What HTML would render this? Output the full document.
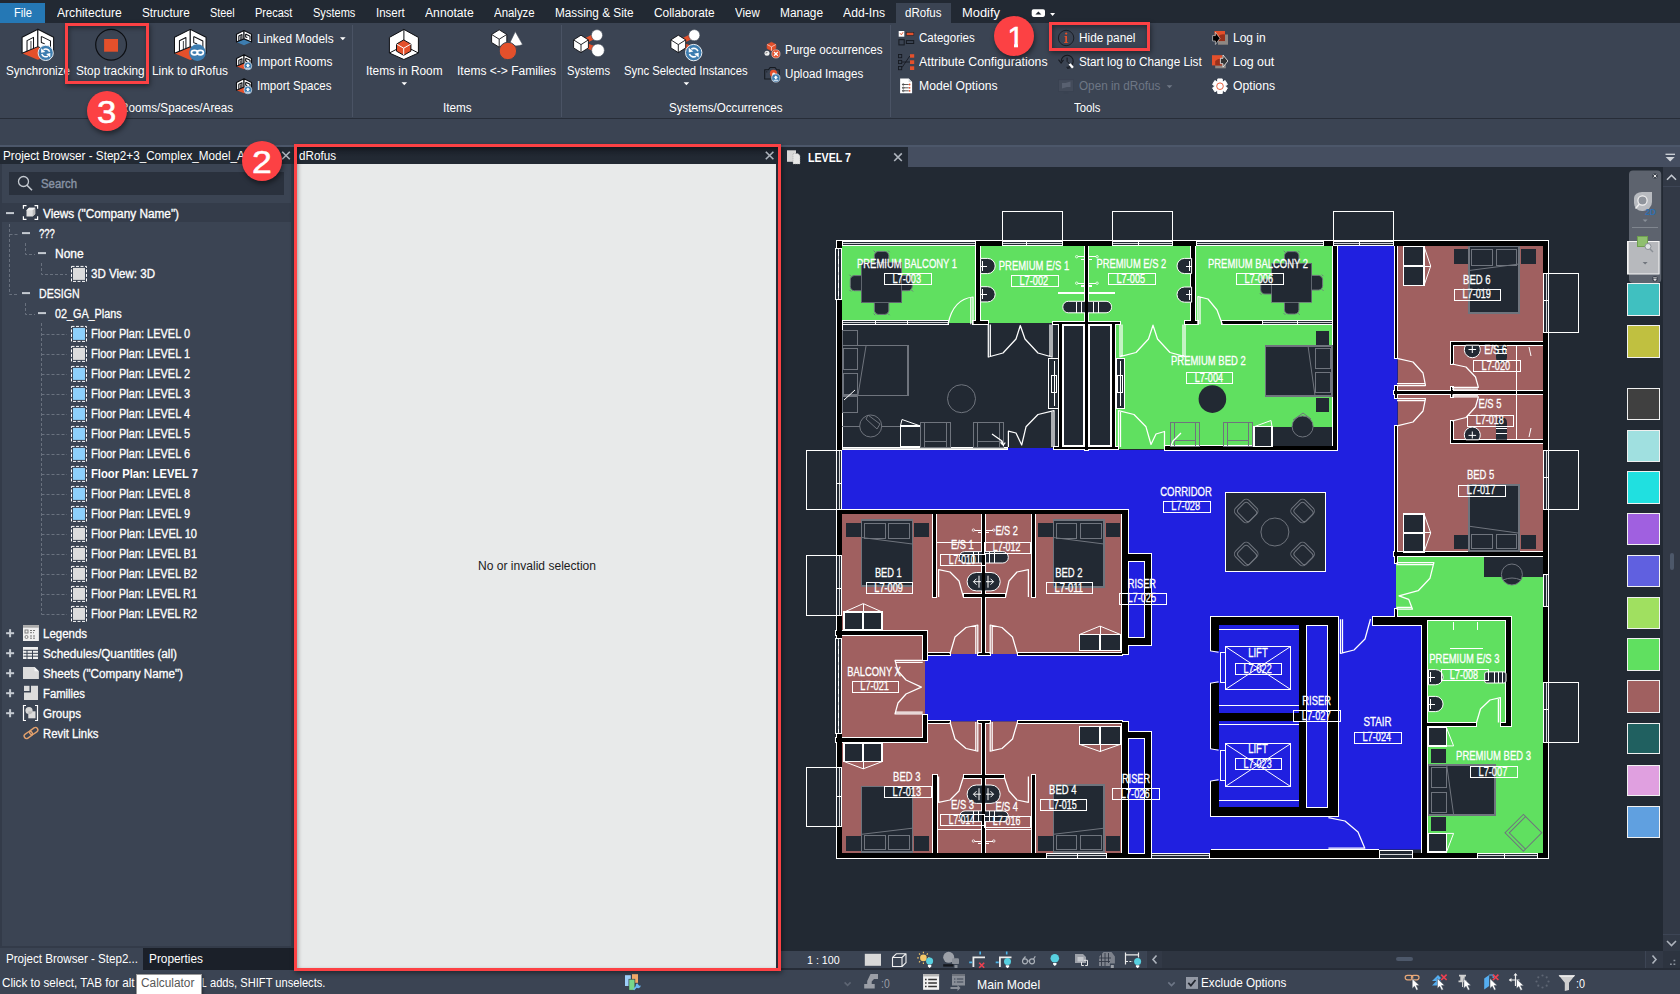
<!DOCTYPE html>
<html><head><meta charset="utf-8"><title>Revit dRofus</title><style>
html,body{margin:0;padding:0}
body{width:1680px;height:994px;overflow:hidden;background:#3b4453;position:relative;font-family:"Liberation Sans",sans-serif}
.b{position:absolute;box-sizing:content-box}
.t{position:absolute;white-space:pre;line-height:1;transform-origin:0 0;font-family:"Liberation Sans",sans-serif}
svg{position:absolute;overflow:visible}
svg text{font-family:"Liberation Sans",sans-serif}
</style></head><body>
<div class="b" style="left:0px;top:0px;width:1680px;height:23px;background:#222933;"></div>
<div class="b" style="left:0px;top:3px;width:45px;height:20px;background:#2578b5;"></div>
<div class="b" style="left:896px;top:3px;width:55px;height:20px;background:#3b4453;"></div>
<div class="b" style="left:0px;top:23px;width:1680px;height:95px;background:#3b4453;"></div>
<div class="b" style="left:0px;top:118px;width:1680px;height:1px;background:#272d38;"></div>
<div class="b" style="left:352px;top:25px;width:1px;height:92px;background:#4a5364;"></div>
<div class="b" style="left:561px;top:25px;width:1px;height:92px;background:#4a5364;"></div>
<div class="b" style="left:890px;top:25px;width:1px;height:92px;background:#4a5364;"></div>
<div class="b" style="left:0px;top:119px;width:1680px;height:26px;background:#3b4453;"></div>
<div class="b" style="left:0px;top:145px;width:1680px;height:2px;background:#4c576a;"></div>
<div class="b" style="left:0px;top:147px;width:294px;height:17px;background:#222933;"></div>
<div class="b" style="left:0px;top:164px;width:294px;height:784px;background:#3b4453;"></div>
<div class="b" style="left:0px;top:164px;width:2px;height:784px;background:#333b49;"></div>
<div class="b" style="left:291px;top:164px;width:3px;height:784px;background:#333b49;"></div>
<div class="b" style="left:9px;top:172px;width:275px;height:23px;background:#2a313d;"></div>
<div class="b" style="left:2px;top:203px;width:289px;height:19px;background:#343c4a;"></div>
<div class="b" style="left:0px;top:946px;width:294px;height:2px;background:#333b49;"></div>
<div class="b" style="left:0px;top:948px;width:294px;height:22px;background:#1b2029;"></div>
<div class="b" style="left:0px;top:948px;width:143px;height:22px;background:#3b4453;"></div>
<div class="b" style="left:781px;top:147px;width:899px;height:20px;background:#454e60;"></div>
<div class="b" style="left:781px;top:147px;width:127px;height:20px;background:#222933;"></div>
<div class="b" style="left:781px;top:167px;width:899px;height:784px;background:#222933;"></div>
<div class="b" style="left:1663px;top:167px;width:17px;height:784px;background:#323946;"></div>
<div class="b" style="left:1663px;top:186px;width:17px;height:1px;background:#3d4555;"></div>
<div class="b" style="left:1663px;top:934px;width:17px;height:1px;background:#3d4555;"></div>
<div class="b" style="left:781px;top:951px;width:899px;height:17px;background:#323946;"></div>
<div class="b" style="left:781px;top:951px;width:365px;height:17px;background:#3b4453;"></div>
<div class="b" style="left:1162px;top:951px;width:483px;height:17px;background:#2e3541;"></div>
<div class="b" style="left:1146px;top:951px;width:1px;height:17px;background:#3d4555;"></div>
<div class="b" style="left:1645px;top:951px;width:1px;height:17px;background:#3d4555;"></div>
<div class="b" style="left:1663px;top:951px;width:17px;height:17px;background:#2d3440;"></div>
<div class="b" style="left:1396px;top:957px;width:17px;height:4px;background:#4d586a;border-radius:2px;"></div>
<div class="b" style="left:1670px;top:553px;width:4px;height:17px;background:#4d586a;border-radius:2px;"></div>
<div class="b" style="left:781px;top:968px;width:899px;height:2px;background:#262c37;"></div>
<div class="b" style="left:0px;top:970px;width:1680px;height:24px;background:#3b4453;"></div>
<div class="b" style="left:294px;top:968px;width:487px;height:2px;background:#3b4453;"></div>
<div class="b" style="left:297px;top:147px;width:481px;height:17px;background:linear-gradient(#1a1f28,#222933 60%);"></div>
<div class="b" style="left:297px;top:164px;width:479px;height:804px;background:#e8eaea;"></div>
<div class="b" style="left:776px;top:164px;width:2px;height:804px;background:#2a303b;"></div>
<div class="b" style="left:294px;top:144px;width:481px;height:821px;border:3px solid #fc4144;box-shadow:1px 2px 5px rgba(0,0,0,.45),inset 1px 2px 4px rgba(0,0,0,.35)"></div>
<svg width="1680" height="140" viewBox="0 0 1680 140" style="left:0;top:0"><path d="M340.0 37.3h5.6l-2.8 3z" fill="#fff"/><path d="M401.5 82.3h5.6l-2.8 3z" fill="#fff"/><path d="M683.6 82.3h5.6l-2.8 3z" fill="#fff"/><path d="M1166.7 85.3h5.6l-2.8 3z" fill="#6e7785"/><path d="M1050.1 13h5l-2.5 3z" fill="#fff"/><rect x="1031.7" y="9.3" width="13.3" height="7.6" rx="1.8" fill="#fff"/><path d="M1035.4 14.6h6l-3-3z" fill="#222933"/></svg>
<svg width="1680" height="140" viewBox="0 0 1680 140" style="left:0;top:0;z-index:4"><g transform="translate(22.1 29.3) scale(0.985)" stroke="#0d0f13" stroke-width="1.02" stroke-linejoin="round"><path d="M0 24.3L16 17.6L32 24.3L16 31Z" fill="#e4502b" stroke="none"/><path d="M0 8L16 0L16 17.6L0 24.3Z" fill="#fff"/><path d="M16 0L32 8L32 24.3L16 17.6Z" fill="#fff"/><path d="M5 22.2L5 11.5L11.6 8.2L11.6 19.4" fill="none"/><path d="M9 20.4L9 11.8" fill="none" stroke-width="0.81"/><path d="M19.5 7.2L28.8 11.8L28.8 19.5M19.5 7.2L19.5 13.4L23 14.8" fill="none"/></g><circle cx="45.7" cy="52.9" r="7.6" fill="#3d7db0" stroke="#e9eef3" stroke-width="1"/><g transform="translate(45.7 52.9) scale(1.000)"><path d="M3.9 -1.2A4 4 0 0 0 -2.2 -3.2" fill="none" stroke="#fff" stroke-width="1.5"/><path d="M-4.6 -4.6L-4.6 -0.2L-0.4 -1.0Z" fill="#fff"/><path d="M-3.9 1.2A4 4 0 0 0 2.2 3.2" fill="none" stroke="#fff" stroke-width="1.5"/><path d="M4.6 4.6L4.6 0.2L0.4 1.0Z" fill="#fff"/></g><g style="isolation:isolate"><circle cx="111.1" cy="44.7" r="15.4" fill="none" stroke="#0d0f13" stroke-width="1.2"/><rect x="104.1" y="39" width="13.9" height="12.7" fill="#e4502b"/></g><g transform="translate(174.5 29.4) scale(0.985)" stroke="#0d0f13" stroke-width="1.02" stroke-linejoin="round"><path d="M0 24.3L16 17.6L32 24.3L16 31Z" fill="#e4502b" stroke="none"/><path d="M0 8L16 0L16 17.6L0 24.3Z" fill="#fff"/><path d="M16 0L32 8L32 24.3L16 17.6Z" fill="#fff"/><path d="M5 22.2L5 11.5L11.6 8.2L11.6 19.4" fill="none"/><path d="M9 20.4L9 11.8" fill="none" stroke-width="0.81"/><path d="M19.5 7.2L28.8 11.8L28.8 19.5M19.5 7.2L19.5 13.4L23 14.8" fill="none"/></g><circle cx="197.4" cy="52.6" r="8.4" fill="#3d7db0"/><g fill="none" stroke="#fff" stroke-width="1.7"><ellipse cx="194.5" cy="52.6" rx="3.1" ry="2.3"/><ellipse cx="200.3" cy="52.6" rx="3.1" ry="2.3"/></g><g transform="translate(236.5 30.6) scale(0.47)" stroke="#0d0f13" stroke-width="2.34" stroke-linejoin="round"><path d="M0 24.3L16 17.6L32 24.3L16 31Z" fill="#3d7db0" stroke="none"/><path d="M0 8L16 0L16 17.6L0 24.3Z" fill="#fff"/><path d="M16 0L32 8L32 24.3L16 17.6Z" fill="#fff"/><path d="M5 22.2L5 11.5L11.6 8.2L11.6 19.4" fill="none"/><path d="M9 20.4L9 11.8" fill="none" stroke-width="1.87"/><path d="M19.5 7.2L28.8 11.8L28.8 19.5M19.5 7.2L19.5 13.4L23 14.8" fill="none"/></g><g transform="translate(236.5 54.8) scale(0.47)" stroke="#0d0f13" stroke-width="2.34" stroke-linejoin="round"><path d="M0 24.3L16 17.6L32 24.3L16 31Z" fill="#e4502b" stroke="none"/><path d="M0 8L16 0L16 17.6L0 24.3Z" fill="#fff"/><path d="M16 0L32 8L32 24.3L16 17.6Z" fill="#fff"/><path d="M5 22.2L5 11.5L11.6 8.2L11.6 19.4" fill="none"/><path d="M9 20.4L9 11.8" fill="none" stroke-width="1.87"/><path d="M19.5 7.2L28.8 11.8L28.8 19.5M19.5 7.2L19.5 13.4L23 14.8" fill="none"/></g><circle cx="247.9" cy="65.9" r="3.9" fill="#3d7db0" stroke="#cfd8e2" stroke-width=".8"/><path d="M247.9 63.50000000000001L250.1 65.7L248.8 65.7L248.8 67.10000000000001L247.0 67.10000000000001L247.0 65.7L245.70000000000002 65.7Z" fill="#fff"/><path d="M245.6 68.2h4.6" stroke="#fff" stroke-width=".9"/><g transform="translate(236.5 78.8) scale(0.47)" stroke="#0d0f13" stroke-width="2.34" stroke-linejoin="round"><path d="M0 24.3L16 17.6L32 24.3L16 31Z" fill="#e4502b" stroke="none"/><path d="M0 8L16 0L16 17.6L0 24.3Z" fill="#fff"/><path d="M16 0L32 8L32 24.3L16 17.6Z" fill="#fff"/><path d="M5 22.2L5 11.5L11.6 8.2L11.6 19.4" fill="none"/><path d="M9 20.4L9 11.8" fill="none" stroke-width="1.87"/><path d="M19.5 7.2L28.8 11.8L28.8 19.5M19.5 7.2L19.5 13.4L23 14.8" fill="none"/></g><circle cx="247.9" cy="89.9" r="3.9" fill="#3d7db0" stroke="#cfd8e2" stroke-width=".8"/><path d="M247.9 87.5L250.1 89.7L248.8 89.7L248.8 91.10000000000001L247.0 91.10000000000001L247.0 89.7L245.70000000000002 89.7Z" fill="#fff"/><path d="M245.6 92.2h4.6" stroke="#fff" stroke-width=".9"/><path d="M403.9 29.4L418.4 37.4L418.4 53L403.9 59.5L389.4 53L389.4 37.4Z" fill="#fff" stroke="#0d0f13" stroke-width="1" stroke-linejoin="round"/><path d="M403.9 29.4L403.9 45.5L389.4 53M403.9 45.5L418.4 53" fill="none" stroke="#0d0f13" stroke-width="1"/><path d="M403.7 39.9L410.9 44.058L410.9 51.141999999999996L403.7 55.3L396.5 51.141999999999996L396.5 44.058Z" fill="#e4502b" stroke="#0d0f13" stroke-width="1" stroke-linejoin="round"/><path d="M396.5 44.058L403.7 48.216L410.9 44.058M403.7 48.216L403.7 55.3" fill="none" stroke="#fff" stroke-width="1"/><path d="M515.3 31.6L522.6 44.6Q516 47.5 509.3 44Z" fill="#fff" stroke="#3b4453" stroke-width=".6"/><path d="M499.2 29.8L506.8 34.498L506.8 42.501999999999995L499.2 47.2L491.59999999999997 42.501999999999995L491.59999999999997 34.498Z" fill="#fff" stroke="#0d0f13" stroke-width="0.9" stroke-linejoin="round"/><path d="M491.59999999999997 34.498L499.2 39.196L506.8 34.498M499.2 39.196L499.2 47.2" fill="none" stroke="#0d0f13" stroke-width="0.9"/><circle cx="507.9" cy="51" r="8.7" fill="#e4502b" stroke="#3b4453" stroke-width="1"/><path d="M584 41.5L594.5 36.3" stroke="#e4502b" stroke-width="5"/><path d="M584 44.5L594 48.6" stroke="#e4502b" stroke-width="5"/><circle cx="597" cy="35.2" r="5.6" fill="#fff" stroke="#3b4453" stroke-width=".6"/><path d="M581 35.2L588.4 39.898L588.4 47.902L581 52.6L573.6 47.902L573.6 39.898Z" fill="#fff" stroke="#0d0f13" stroke-width="0.9" stroke-linejoin="round"/><path d="M573.6 39.898L581 44.596000000000004L588.4 39.898M581 44.596000000000004L581 52.6" fill="none" stroke="#0d0f13" stroke-width="0.9"/><circle cx="598" cy="50.3" r="6.4" fill="#fff" stroke="#3b4453" stroke-width=".6"/><path d="M681.3 41.5L691.8 36.3" stroke="#e4502b" stroke-width="5"/><path d="M681.3 44.5L691.3 48.6" stroke="#e4502b" stroke-width="5"/><circle cx="694.3" cy="35.2" r="5.6" fill="#fff" stroke="#3b4453" stroke-width=".6"/><path d="M678.3 35.2L685.6999999999999 39.898L685.6999999999999 47.902L678.3 52.6L670.9 47.902L670.9 39.898Z" fill="#fff" stroke="#0d0f13" stroke-width="0.9" stroke-linejoin="round"/><path d="M670.9 39.898L678.3 44.596000000000004L685.6999999999999 39.898M678.3 44.596000000000004L678.3 52.6" fill="none" stroke="#0d0f13" stroke-width="0.9"/><circle cx="693.7" cy="52.6" r="8.2" fill="#3d7db0" stroke="#e9eef3" stroke-width="1"/><g transform="translate(693.7 52.6) scale(1.079)"><path d="M3.9 -1.2A4 4 0 0 0 -2.2 -3.2" fill="none" stroke="#fff" stroke-width="1.5"/><path d="M-4.6 -4.6L-4.6 -0.2L-0.4 -1.0Z" fill="#fff"/><path d="M-3.9 1.2A4 4 0 0 0 2.2 3.2" fill="none" stroke="#fff" stroke-width="1.5"/><path d="M4.6 4.6L4.6 0.2L0.4 1.0Z" fill="#fff"/></g><path d="M771.5 42.2L775.9 44.522000000000006L775.9 48.47800000000001L771.5 50.800000000000004L767.1 48.47800000000001L767.1 44.522000000000006Z" fill="#e4502b" stroke="#e4502b" stroke-width="0.6" stroke-linejoin="round"/><path d="M767.1 44.522000000000006L771.5 46.844L775.9 44.522000000000006M771.5 46.844L771.5 50.800000000000004" fill="none" stroke="#fff" stroke-width="0.6"/><circle cx="767" cy="53.2" r="2.5" fill="#f2f2f2"/><path d="M766 53.8v-1.4h1.6" stroke="#555" stroke-width=".6" fill="none"/><circle cx="775.9" cy="53.9" r="4.1" fill="#e4502b" stroke="#f0c8bd" stroke-width=".7"/><path d="M774 52l3.8 3.8m0 -3.8l-3.8 3.8" stroke="#fff" stroke-width="1.3"/><path d="M764.7 69.8h3.8l1.6-2.3h5l1.6 2.3h2.6v9.2h-14.6z" fill="none" stroke="#161a21" stroke-width="1.1" stroke-linejoin="round"/><circle cx="773.5" cy="73.4" r="3.6" fill="#e4502b"/><circle cx="773.8" cy="74.2" r="1.6" fill="#f0f0f0"/><circle cx="766.8" cy="71.8" r=".6" fill="#161a21"/><circle cx="775.8" cy="78" r="4.1" fill="#3d7db0" stroke="#cfd8e2" stroke-width=".8"/><path d="M775.8 75.6L778.0 77.8L776.6999999999999 77.8L776.6999999999999 79.2L774.9 79.2L774.9 77.8L773.5999999999999 77.8Z" fill="#fff"/><path d="M773.5 80.3h4.6" stroke="#fff" stroke-width=".9"/><rect x="898.7" y="31" width="5.6" height="5.7" fill="#fff"/><path d="M900 33.2l1.4 1.6l1.7-2.6" stroke="#e4502b" stroke-width=".9" fill="none"/><rect x="906.3" y="32.5" width="7.5" height="2.8" fill="#e4502b" stroke="#1a1e26" stroke-width=".5"/><rect x="898.9" y="39.7" width="5.3" height="5.2" fill="none" stroke="#161a21" stroke-width="1"/><rect x="906.4" y="40.6" width="7.3" height="2.9" fill="none" stroke="#161a21" stroke-width="1"/><rect x="898.5" y="54.5" width="3.2" height="3.2" fill="none" stroke="#161a21" stroke-width=".9"/><rect x="898.5" y="60.4" width="3.2" height="3.2" fill="none" stroke="#161a21" stroke-width=".9"/><rect x="898.5" y="66.5" width="3.2" height="3.2" fill="none" stroke="#161a21" stroke-width=".9"/><rect x="910" y="54.2" width="4.2" height="3.5" fill="#e4502b"/><rect x="910" y="60.3" width="4.2" height="3.7" fill="#e4502b"/><rect x="910" y="66.3" width="4.2" height="3.7" fill="#e4502b"/><path d="M902 67.5L909.8 56M902 62H910" stroke="#161a21" stroke-width=".9" fill="none"/><path d="M900.1 78.5h8.6l3.4 3.6v11.2h-12z" fill="#fff"/><path d="M908.7 78.5v3.6h3.4z" fill="#cfd3d8"/><path d="M902.2 84.5h6.5" stroke="#333" stroke-width=".8"/><circle cx="903.3" cy="84.5" r=".9" fill="none" stroke="#333" stroke-width=".5"/><circle cx="909.6" cy="84.5" r=".9" fill="#e4502b"/><path d="M902.2 87.8h6.5" stroke="#333" stroke-width=".8"/><circle cx="903.3" cy="87.8" r=".9" fill="none" stroke="#333" stroke-width=".5"/><circle cx="909.6" cy="87.8" r=".9" fill="#e4502b"/><path d="M902.2 90.8h6.5" stroke="#333" stroke-width=".8"/><circle cx="903.3" cy="90.8" r=".9" fill="none" stroke="#333" stroke-width=".5"/><circle cx="909.6" cy="90.8" r=".9" fill="#e4502b"/><g style="isolation:isolate"><circle cx="1066.1" cy="38" r="7.7" fill="none" stroke="#1a1e26" stroke-width="1"/><circle cx="1066.2" cy="33.6" r="1.1" fill="#e4502b"/><path d="M1064.6 36h2.4v6.2h1.2v.9h-4.2v-.9h1.3v-5.3h-.7z" fill="#e4502b"/></g><path d="M1061.2 61.5A6 6 0 1 1 1066.5 67.2" fill="none" stroke="#161a21" stroke-width="1.1"/><path d="M1058.5 59.6l2.6 3.4l2.4-3.2" fill="none" stroke="#161a21" stroke-width="1.1"/><path d="M1067.1 57.6v3.8l2.4 2.4" fill="none" stroke="#161a21" stroke-width="1"/><path d="M1068.6 64.6l1.9-1.3l3.3 3.6l-1.8 1.6z" fill="#fff"/><path d="M1067.2 68.5l3-.6" stroke="#161a21" stroke-width=".9"/><rect x="1058.5" y="79.7" width="15" height="11.8" fill="#434b5a" stroke="#394150" stroke-width=".8"/><path d="M1062 88.5v-5.5h3.5l5-1.5v5.5h-3.5z" fill="#586070"/><path d="M1063.5 93h5" stroke="#394150" stroke-width="1"/><rect x="1218" y="34.5" width="10" height="10.2" fill="#8d8884"/><rect x="1214.5" y="31" width="10.5" height="10.1" fill="#e4502b"/><path d="M1218 41.1V36.5Q1221 33.5 1225 34.5V41.1z" fill="#98301b"/><path d="M1212.6 35.6h2.8v-3.4l4.6 6.1l-4.6 6.2v-3.5h-2.8z" fill="#000" stroke="#e8e8e8" stroke-width=".6"/><rect x="1215.2" y="58.4" width="10.6" height="9.9" fill="#8d8884"/><rect x="1212" y="55.2" width="10.3" height="10.2" fill="#e4502b"/><path d="M1215.2 65.4V61Q1218 58 1222.3 58.6V65.4z" fill="#98301b"/><path d="M1220.4 58.3h2.6v-3.3l4.9 6l-4.9 6.1v-3.4h-2.6z" fill="#333" stroke="#f0f0f0" stroke-width=".8"/><path d="M1217.75 78.94L1222.25 78.94L1222.32 81.00L1223.35 81.58L1225.16 80.62L1227.41 84.51L1225.67 85.61L1225.67 86.79L1227.41 87.89L1225.16 91.78L1223.35 90.82L1222.32 91.40L1222.25 93.46L1217.75 93.46L1217.68 91.40L1216.65 90.82L1214.84 91.78L1212.59 87.89L1214.33 86.79L1214.33 85.61L1212.59 84.51L1214.84 80.62L1216.65 81.58L1217.68 81.00Z" fill="#fff" stroke="#fff" stroke-width="1" stroke-linejoin="round"/><circle cx="1220" cy="86.2" r="3.3" fill="#fff" stroke="#e4502b" stroke-width=".9"/></svg>
<div class="b" style="left:65px;top:23px;width:78px;height:55px;border:3px solid #fc4144;box-shadow:1px 2px 5px rgba(0,0,0,.45),inset 1px 2px 5px rgba(0,0,0,.4);z-index:5"></div>
<div class="b" style="left:1049px;top:22px;width:95px;height:23px;border:3px solid #fc4144;box-shadow:1px 2px 5px rgba(0,0,0,.45),inset 1px 2px 5px rgba(0,0,0,.4);z-index:5"></div>
<div class="b" style="left:994px;top:15.899999999999999px;width:40px;height:40px;border-radius:50%;background:#fc4144;box-shadow:1px 3px 5px rgba(0,0,0,.45);z-index:8"></div>
<span class="t" style="left:1007.4px;top:22.1px;font-size:29.5px;color:#fff;-webkit-text-stroke:.5px #fff;transform:scaleX(1.0);z-index:9">1</span>
<div class="b" style="left:1005px;top:43.7px;width:8.7px;height:4.6px;background:#fc4144;z-index:10"></div>
<div class="b" style="left:1018.1px;top:43.7px;width:6px;height:4.6px;background:#fc4144;z-index:10"></div>
<div class="b" style="left:242px;top:141px;width:40px;height:40px;border-radius:50%;background:#fc4144;box-shadow:1px 3px 5px rgba(0,0,0,.45);z-index:8"></div>
<span class="t" style="left:251.8px;top:146.8px;font-size:30.5px;color:#fff;-webkit-text-stroke:.5px #fff;transform:scaleX(1.17);z-index:9">2</span>
<div class="b" style="left:87px;top:91px;width:40px;height:40px;border-radius:50%;background:#fc4144;box-shadow:1px 3px 5px rgba(0,0,0,.45);z-index:8"></div>
<span class="t" style="left:97.3px;top:96.7px;font-size:30.5px;color:#fff;-webkit-text-stroke:.5px #fff;transform:scaleX(1.14);z-index:9">3</span>
<svg width="1680" height="994" viewBox="0 0 1680 994" style="left:0;top:0;z-index:3"><rect x="6" y="212.1" width="8" height="2" fill="#c5cad1"/><rect x="22" y="232.1" width="8" height="2" fill="#c5cad1"/><rect x="38" y="252.1" width="8" height="2" fill="#c5cad1"/><rect x="22" y="292.1" width="8" height="2" fill="#c5cad1"/><rect x="38" y="312.1" width="8" height="2" fill="#c5cad1"/><rect x="6.1" y="632.2" width="8" height="2" fill="#c5cad1"/><rect x="9.1" y="629.2" width="2" height="8" fill="#c5cad1"/><rect x="6.1" y="652.2" width="8" height="2" fill="#c5cad1"/><rect x="9.1" y="649.2" width="2" height="8" fill="#c5cad1"/><rect x="6.1" y="672.2" width="8" height="2" fill="#c5cad1"/><rect x="9.1" y="669.2" width="2" height="8" fill="#c5cad1"/><rect x="6.1" y="692.2" width="8" height="2" fill="#c5cad1"/><rect x="9.1" y="689.2" width="2" height="8" fill="#c5cad1"/><rect x="6.1" y="712.2" width="8" height="2" fill="#c5cad1"/><rect x="9.1" y="709.2" width="2" height="8" fill="#c5cad1"/><path d="M9.5 224V294.5H19" fill="none" stroke="#69717e" stroke-width="1" stroke-dasharray="3 2"/><path d="M9.5 234.5H19" fill="none" stroke="#69717e" stroke-width="1" stroke-dasharray="3 2"/><path d="M25.5 243V254.5H35" fill="none" stroke="#69717e" stroke-width="1" stroke-dasharray="3 2"/><path d="M41.5 263V274.5H67" fill="none" stroke="#69717e" stroke-width="1" stroke-dasharray="3 2"/><path d="M25.5 303V314.5H35" fill="none" stroke="#69717e" stroke-width="1" stroke-dasharray="3 2"/><path d="M41.5 323V614.5" fill="none" stroke="#69717e" stroke-width="1" stroke-dasharray="3 2"/><path d="M41.5 334.5H67" fill="none" stroke="#69717e" stroke-width="1" stroke-dasharray="3 2"/><path d="M41.5 354.5H67" fill="none" stroke="#69717e" stroke-width="1" stroke-dasharray="3 2"/><path d="M41.5 374.5H67" fill="none" stroke="#69717e" stroke-width="1" stroke-dasharray="3 2"/><path d="M41.5 394.5H67" fill="none" stroke="#69717e" stroke-width="1" stroke-dasharray="3 2"/><path d="M41.5 414.5H67" fill="none" stroke="#69717e" stroke-width="1" stroke-dasharray="3 2"/><path d="M41.5 434.5H67" fill="none" stroke="#69717e" stroke-width="1" stroke-dasharray="3 2"/><path d="M41.5 454.5H67" fill="none" stroke="#69717e" stroke-width="1" stroke-dasharray="3 2"/><path d="M41.5 474.5H67" fill="none" stroke="#69717e" stroke-width="1" stroke-dasharray="3 2"/><path d="M41.5 494.5H67" fill="none" stroke="#69717e" stroke-width="1" stroke-dasharray="3 2"/><path d="M41.5 514.5H67" fill="none" stroke="#69717e" stroke-width="1" stroke-dasharray="3 2"/><path d="M41.5 534.5H67" fill="none" stroke="#69717e" stroke-width="1" stroke-dasharray="3 2"/><path d="M41.5 554.5H67" fill="none" stroke="#69717e" stroke-width="1" stroke-dasharray="3 2"/><path d="M41.5 574.5H67" fill="none" stroke="#69717e" stroke-width="1" stroke-dasharray="3 2"/><path d="M41.5 594.5H67" fill="none" stroke="#69717e" stroke-width="1" stroke-dasharray="3 2"/><path d="M41.5 614.5H67" fill="none" stroke="#69717e" stroke-width="1" stroke-dasharray="3 2"/><rect x="71.5" y="266.4" width="15" height="15" fill="none" stroke="#fff" stroke-width="1" stroke-dasharray="3 1.5"/><rect x="73" y="267.9" width="12" height="12" fill="#dcdcdc"/><rect x="71.5" y="326.4" width="15" height="15" fill="none" stroke="#fff" stroke-width="1" stroke-dasharray="3 1.5"/><rect x="73" y="327.9" width="12" height="12" fill="#8dd0fb"/><rect x="71.5" y="346.4" width="15" height="15" fill="none" stroke="#fff" stroke-width="1" stroke-dasharray="3 1.5"/><rect x="73" y="347.9" width="12" height="12" fill="#dcdcdc"/><rect x="71.5" y="366.4" width="15" height="15" fill="none" stroke="#fff" stroke-width="1" stroke-dasharray="3 1.5"/><rect x="73" y="367.9" width="12" height="12" fill="#8dd0fb"/><rect x="71.5" y="386.4" width="15" height="15" fill="none" stroke="#fff" stroke-width="1" stroke-dasharray="3 1.5"/><rect x="73" y="387.9" width="12" height="12" fill="#8dd0fb"/><rect x="71.5" y="406.4" width="15" height="15" fill="none" stroke="#fff" stroke-width="1" stroke-dasharray="3 1.5"/><rect x="73" y="407.9" width="12" height="12" fill="#8dd0fb"/><rect x="71.5" y="426.4" width="15" height="15" fill="none" stroke="#fff" stroke-width="1" stroke-dasharray="3 1.5"/><rect x="73" y="427.9" width="12" height="12" fill="#8dd0fb"/><rect x="71.5" y="446.4" width="15" height="15" fill="none" stroke="#fff" stroke-width="1" stroke-dasharray="3 1.5"/><rect x="73" y="447.9" width="12" height="12" fill="#8dd0fb"/><rect x="71.5" y="466.4" width="15" height="15" fill="none" stroke="#fff" stroke-width="1" stroke-dasharray="3 1.5"/><rect x="73" y="467.9" width="12" height="12" fill="#8dd0fb"/><rect x="71.5" y="486.4" width="15" height="15" fill="none" stroke="#fff" stroke-width="1" stroke-dasharray="3 1.5"/><rect x="73" y="487.9" width="12" height="12" fill="#8dd0fb"/><rect x="71.5" y="506.4" width="15" height="15" fill="none" stroke="#fff" stroke-width="1" stroke-dasharray="3 1.5"/><rect x="73" y="507.9" width="12" height="12" fill="#8dd0fb"/><rect x="71.5" y="526.4" width="15" height="15" fill="none" stroke="#fff" stroke-width="1" stroke-dasharray="3 1.5"/><rect x="73" y="527.9" width="12" height="12" fill="#dcdcdc"/><rect x="71.5" y="546.4" width="15" height="15" fill="none" stroke="#fff" stroke-width="1" stroke-dasharray="3 1.5"/><rect x="73" y="547.9" width="12" height="12" fill="#dcdcdc"/><rect x="71.5" y="566.4" width="15" height="15" fill="none" stroke="#fff" stroke-width="1" stroke-dasharray="3 1.5"/><rect x="73" y="567.9" width="12" height="12" fill="#dcdcdc"/><rect x="71.5" y="586.4" width="15" height="15" fill="none" stroke="#fff" stroke-width="1" stroke-dasharray="3 1.5"/><rect x="73" y="587.9" width="12" height="12" fill="#dcdcdc"/><rect x="71.5" y="606.4" width="15" height="15" fill="none" stroke="#fff" stroke-width="1" stroke-dasharray="3 1.5"/><rect x="73" y="607.9" width="12" height="12" fill="#dcdcdc"/><path d="M23.4 208.8V205.7H26.5M34.5 205.7H37.6V208.8M37.6 216.3V219.4H34.5M26.5 219.4H23.4V216.3" fill="none" stroke="#fff" stroke-width="1.2"/><path d="M26.5 210.3L29 207.8H35.2V214L32.7 216.6H26.5Z" fill="#dedede"/><path d="M32.7 210.3V216.6L35.2 214V207.8Z" fill="#bdbdbd"/><path d="M26.5 210.3L29 207.8H35.2L32.7 210.3Z" fill="#f2f2f2"/><rect x="23" y="625.1" width="15.9" height="15.9" fill="#f0f0f0"/><rect x="23" y="625.1" width="15.9" height="2.6" fill="#a9a9a9"/><rect x="25" y="630" width="3" height="3" fill="none" stroke="#777" stroke-width=".9"/><circle cx="26.5" cy="637" r="1.5" fill="none" stroke="#777" stroke-width=".9"/><path d="M30 630.5h6M30 632.7h4M30 636h6M30 638.2h5" stroke="#777" stroke-width="1" stroke-dasharray="2 1"/><rect x="23" y="647" width="15" height="12" fill="#f0f0f0"/><path d="M23.5 650.3H38M23.5 653.3H38M23.5 656.2H38M27 650V659M32.5 650V659" stroke="#3b4453" stroke-width="1"/><path d="M23 667H34.5L38.9 671.2V679H23Z" fill="#dcdcdc"/><path d="M34.5 667V671.2H38.9Z" fill="#f6f6f6"/><path d="M24 685.8H29.5V691H24Z" fill="#dcdcdc"/><path d="M31 685.8H38V700H24V692.5H31Z" fill="#dcdcdc"/><path d="M26 705.5H23.5V720.5H26M35 705.5H37.5V720.5H35" fill="none" stroke="#fff" stroke-width="1.2"/><circle cx="29" cy="710.5" r="3.6" fill="#d6d6d6"/><rect x="28.3" y="711.3" width="7.2" height="7" fill="#dcdcdc"/><path d="M28.3 711.3h4.3a3.6 3.6 0 0 1 -4.3 2.8z" fill="#bcbcbc"/><g fill="none" stroke="#e2a06c" stroke-width="1.4" transform="rotate(-35 31 733)"><rect x="23.2" y="730.6" width="9" height="4.8" rx="2.4"/><rect x="29.8" y="730.6" width="9" height="4.8" rx="2.4"/></g><circle cx="23.5" cy="181.5" r="5" fill="none" stroke="#c5cad1" stroke-width="1.3"/><path d="M27 185.3L32 190.3" stroke="#c5cad1" stroke-width="1.6"/><path d="M282.2 151.7L289.8 159.3M289.8 151.7L282.2 159.3" stroke="#aeb4bd" stroke-width="1.6"/><path d="M765.8000000000001 151.7L773.4 159.3M773.4 151.7L765.8000000000001 159.3" stroke="#aeb4bd" stroke-width="1.6"/><path d="M894.2 153.39999999999998L901.8 161.0M901.8 153.39999999999998L894.2 161.0" stroke="#aeb4bd" stroke-width="1.6"/><rect x="787" y="150.3" width="9" height="11.5" fill="#d8d8d8"/><path d="M793 153.5h5l2 2V164h-7z" fill="#e6e6e6" stroke="#9a9a9a" stroke-width=".5" stroke-dasharray="1.2 .8"/><path d="M1665.5 154.3h9.5" stroke="#d0d4da" stroke-width="1.3"/><path d="M1665.7 157h9l-4.5 4.4z" fill="#d0d4da"/><path d="M1667 179.8l4.5-4.5l4.5 4.5" fill="none" stroke="#c5cad1" stroke-width="1.6"/><path d="M1667 941l4.5 4.5l4.5-4.5" fill="none" stroke="#aeb4bd" stroke-width="1.6"/><path d="M1156.5 955.5l-3.5 4l3.5 4" fill="none" stroke="#aeb4bd" stroke-width="1.6"/><path d="M1652.5 955.5l3.5 4l-3.5 4" fill="none" stroke="#aeb4bd" stroke-width="1.6"/><path d="M1670 964.3h1.8M1673.5 964.3h1.8M1673.5 960.5h1.8" stroke="#8a919c" stroke-width="1.4"/></svg>
<svg width="1680" height="994" viewBox="0 0 1680 994" style="left:0;top:0" shape-rendering="auto">
<rect x="842.0" y="246.0" width="349.0" height="77.0" fill="#60e060" shape-rendering="crispEdges" />
<rect x="1088.0" y="246.0" width="245.0" height="200.5" fill="#60e060" shape-rendering="crispEdges" />
<rect x="1118.0" y="446.0" width="47.0" height="2.5" fill="#60e060" shape-rendering="crispEdges" />
<rect x="1058.7" y="322.0" width="56.5" height="126.8" fill="#222933" shape-rendering="crispEdges" />
<path d="M842 450L1337.5 450L1337.5 246L1397.5 246L1397.5 616.8L1421.5 616.8L1421.5 849.5L1210.5 849.5L1210.5 854L1127.7 854L1127.7 721.5L925 721.5L925 654L1127.7 654L1127.7 510L842 510Z" fill="#2020e0" stroke="none" stroke-width="1" />
<rect x="1007.4" y="447.5" width="46.6" height="3.5" fill="#2020e0" shape-rendering="crispEdges" />
<path d="M842 514L1121.4 514L1121.4 654L925 654L925 721.5L1121.4 721.5L1121.4 853.3L842 853.3Z" fill="#a06060" stroke="none" stroke-width="1" />
<rect x="1397.5" y="246.0" width="146.3" height="306.5" fill="#a06060" shape-rendering="crispEdges" />
<path d="M1396 556.5L1543.6 556.5L1543.6 853.3L1426.8 853.3L1426.8 616.8L1396 616.8Z" fill="#60e060" stroke="none" stroke-width="1" />
<rect x="835.7" y="239.7" width="713.6" height="6.3" fill="#ffffff" shape-rendering="crispEdges" />
<rect x="835.7" y="239.7" width="5.9" height="619.6" fill="#ffffff" shape-rendering="crispEdges" />
<rect x="1543.8" y="239.7" width="5.5" height="619.6" fill="#ffffff" shape-rendering="crispEdges" />
<rect x="835.7" y="853.3" width="713.6" height="6.0" fill="#ffffff" shape-rendering="crispEdges" />
<rect x="1210.5" y="848.7" width="168.5" height="10.6" fill="#ffffff" shape-rendering="crispEdges" />
<rect x="974.7" y="245.2" width="6.1" height="77.1" fill="#ffffff" shape-rendering="crispEdges" />
<rect x="1084.0" y="245.2" width="5.1" height="205.6" fill="#ffffff" shape-rendering="crispEdges" />
<rect x="1190.0" y="245.2" width="6.0" height="80.1" fill="#ffffff" shape-rendering="crispEdges" />
<rect x="1332.0" y="239.7" width="6.4" height="210.9" fill="#ffffff" shape-rendering="crispEdges" />
<rect x="972.2" y="320.0" width="16.9" height="5.3" fill="#ffffff" shape-rendering="crispEdges" />
<rect x="1051.8" y="321.2" width="69.5" height="3.9" fill="#ffffff" shape-rendering="crispEdges" />
<rect x="1057.9" y="321.2" width="4.9" height="128.4" fill="#ffffff" shape-rendering="crispEdges" />
<rect x="1110.6" y="321.2" width="5.4" height="128.4" fill="#ffffff" shape-rendering="crispEdges" />
<rect x="1184.2" y="320.0" width="14.6" height="5.3" fill="#ffffff" shape-rendering="crispEdges" />
<rect x="1221.2" y="320.0" width="42.1" height="5.3" fill="#ffffff" shape-rendering="crispEdges" />
<rect x="1164.2" y="445.4" width="174.2" height="5.2" fill="#ffffff" shape-rendering="crispEdges" />
<rect x="1053.2" y="445.7" width="65.6" height="3.9" fill="#ffffff" shape-rendering="crispEdges" />
<rect x="835.7" y="509.2" width="292.0" height="4.8" fill="#ffffff" shape-rendering="crispEdges" />
<rect x="932.1" y="513.2" width="5.0" height="84.9" fill="#ffffff" shape-rendering="crispEdges" />
<rect x="980.8" y="513.2" width="5.0" height="142.6" fill="#ffffff" shape-rendering="crispEdges" />
<rect x="1031.1" y="513.2" width="4.8" height="84.9" fill="#ffffff" shape-rendering="crispEdges" />
<rect x="962.6" y="593.2" width="43.7" height="4.8" fill="#ffffff" shape-rendering="crispEdges" />
<rect x="1120.6" y="509.2" width="7.9" height="146.1" fill="#ffffff" shape-rendering="crispEdges" />
<rect x="835.2" y="629.5" width="93.1" height="6.8" fill="#ffffff" shape-rendering="crispEdges" />
<rect x="921.9" y="629.5" width="6.4" height="31.7" fill="#ffffff" shape-rendering="crispEdges" />
<rect x="921.9" y="713.7" width="6.4" height="29.5" fill="#ffffff" shape-rendering="crispEdges" />
<rect x="835.2" y="736.5" width="93.1" height="6.7" fill="#ffffff" shape-rendering="crispEdges" />
<rect x="926.7" y="651.7" width="24.1" height="4.1" fill="#ffffff" shape-rendering="crispEdges" />
<rect x="1016.7" y="651.7" width="106.1" height="4.1" fill="#ffffff" shape-rendering="crispEdges" />
<rect x="977.0" y="651.7" width="14.0" height="4.1" fill="#ffffff" shape-rendering="crispEdges" />
<rect x="926.7" y="719.5" width="24.1" height="4.1" fill="#ffffff" shape-rendering="crispEdges" />
<rect x="1016.7" y="719.5" width="106.1" height="4.1" fill="#ffffff" shape-rendering="crispEdges" />
<rect x="977.0" y="719.5" width="14.0" height="4.1" fill="#ffffff" shape-rendering="crispEdges" />
<rect x="932.1" y="773.8" width="5.4" height="80.5" fill="#ffffff" shape-rendering="crispEdges" />
<rect x="980.8" y="720.7" width="5.0" height="133.6" fill="#ffffff" shape-rendering="crispEdges" />
<rect x="1031.1" y="773.8" width="5.2" height="80.5" fill="#ffffff" shape-rendering="crispEdges" />
<rect x="962.6" y="774.2" width="42.4" height="5.0" fill="#ffffff" shape-rendering="crispEdges" />
<rect x="1120.6" y="720.6" width="7.9" height="133.7" fill="#ffffff" shape-rendering="crispEdges" />
<rect x="1120.6" y="552.8" width="31.8" height="93.0" fill="#ffffff" shape-rendering="crispEdges" />
<rect x="1120.6" y="730.7" width="31.8" height="124.1" fill="#ffffff" shape-rendering="crispEdges" />
<rect x="1209.7" y="616.0" width="129.1" height="200.5" fill="#ffffff" shape-rendering="crispEdges" />
<rect x="1371.6" y="616.0" width="56.0" height="9.8" fill="#ffffff" shape-rendering="crispEdges" />
<rect x="1420.9" y="616.0" width="6.7" height="242.8" fill="#ffffff" shape-rendering="crispEdges" />
<rect x="1426.0" y="615.7" width="85.7" height="5.4" fill="#ffffff" shape-rendering="crispEdges" />
<rect x="1505.4" y="615.7" width="6.3" height="110.9" fill="#ffffff" shape-rendering="crispEdges" />
<rect x="1426.0" y="721.7" width="51.3" height="4.9" fill="#ffffff" shape-rendering="crispEdges" />
<rect x="1499.6" y="721.7" width="12.1" height="4.9" fill="#ffffff" shape-rendering="crispEdges" />
<rect x="1393.2" y="389.7" width="151.4" height="5.4" fill="#ffffff" shape-rendering="crispEdges" />
<rect x="1449.5" y="341.0" width="95.1" height="4.5" fill="#ffffff" shape-rendering="crispEdges" />
<rect x="1449.5" y="341.0" width="4.9" height="23.8" fill="#ffffff" shape-rendering="crispEdges" />
<rect x="1449.5" y="420.2" width="4.9" height="23.6" fill="#ffffff" shape-rendering="crispEdges" />
<rect x="1449.5" y="386.2" width="4.9" height="12.1" fill="#ffffff" shape-rendering="crispEdges" />
<rect x="1449.5" y="439.4" width="95.1" height="4.4" fill="#ffffff" shape-rendering="crispEdges" />
<rect x="1393.2" y="551.2" width="151.4" height="6.1" fill="#ffffff" shape-rendering="crispEdges" />
<rect x="1393.5" y="245.2" width="4.6" height="113.9" fill="#ffffff" shape-rendering="crispEdges" />
<rect x="1393.5" y="425.2" width="4.6" height="138.6" fill="#ffffff" shape-rendering="crispEdges" />
<rect x="1393.5" y="384.7" width="4.6" height="14.6" fill="#ffffff" shape-rendering="crispEdges" />
<rect x="1393.5" y="608.2" width="4.6" height="9.6" fill="#ffffff" shape-rendering="crispEdges" />
<rect x="836.7" y="240.7" width="711.6" height="5.7" fill="#000" shape-rendering="crispEdges" />
<rect x="836.7" y="240.7" width="5.3" height="617.6" fill="#000" shape-rendering="crispEdges" />
<rect x="1543.4" y="240.7" width="4.9" height="617.6" fill="#000" shape-rendering="crispEdges" />
<rect x="836.7" y="852.9" width="711.6" height="5.4" fill="#000" shape-rendering="crispEdges" />
<rect x="1210.1" y="849.7" width="169.3" height="8.6" fill="#000" shape-rendering="crispEdges" />
<rect x="975.7" y="246.2" width="4.1" height="75.1" fill="#000" shape-rendering="crispEdges" />
<rect x="1085.0" y="246.2" width="3.1" height="203.6" fill="#000" shape-rendering="crispEdges" />
<rect x="1191.0" y="246.2" width="4.0" height="78.1" fill="#000" shape-rendering="crispEdges" />
<rect x="1333.0" y="240.7" width="4.4" height="208.9" fill="#000" shape-rendering="crispEdges" />
<rect x="973.2" y="321.0" width="14.9" height="3.3" fill="#000" shape-rendering="crispEdges" />
<rect x="1052.8" y="322.2" width="67.5" height="1.9" fill="#000" shape-rendering="crispEdges" />
<rect x="1058.9" y="322.2" width="2.9" height="126.4" fill="#000" shape-rendering="crispEdges" />
<rect x="1111.6" y="322.2" width="3.4" height="126.4" fill="#000" shape-rendering="crispEdges" />
<rect x="1185.2" y="321.0" width="12.6" height="3.3" fill="#000" shape-rendering="crispEdges" />
<rect x="1222.2" y="321.0" width="40.1" height="3.3" fill="#000" shape-rendering="crispEdges" />
<rect x="1165.2" y="446.4" width="172.2" height="3.2" fill="#000" shape-rendering="crispEdges" />
<rect x="1054.2" y="446.7" width="63.6" height="1.9" fill="#000" shape-rendering="crispEdges" />
<rect x="836.7" y="510.2" width="291.4" height="4.2" fill="#000" shape-rendering="crispEdges" />
<rect x="933.1" y="514.2" width="3.0" height="82.9" fill="#000" shape-rendering="crispEdges" />
<rect x="981.8" y="514.2" width="3.0" height="140.6" fill="#000" shape-rendering="crispEdges" />
<rect x="1032.1" y="514.2" width="2.8" height="82.9" fill="#000" shape-rendering="crispEdges" />
<rect x="963.6" y="594.2" width="41.7" height="2.8" fill="#000" shape-rendering="crispEdges" />
<rect x="1121.6" y="510.2" width="5.9" height="144.1" fill="#000" shape-rendering="crispEdges" />
<rect x="836.2" y="630.5" width="91.1" height="4.8" fill="#000" shape-rendering="crispEdges" />
<rect x="922.9" y="630.5" width="4.4" height="29.7" fill="#000" shape-rendering="crispEdges" />
<rect x="922.9" y="714.7" width="4.4" height="27.5" fill="#000" shape-rendering="crispEdges" />
<rect x="836.2" y="737.5" width="91.1" height="4.7" fill="#000" shape-rendering="crispEdges" />
<rect x="927.7" y="652.7" width="22.1" height="2.1" fill="#000" shape-rendering="crispEdges" />
<rect x="1017.7" y="652.7" width="104.1" height="2.1" fill="#000" shape-rendering="crispEdges" />
<rect x="978.0" y="652.7" width="12.0" height="2.1" fill="#000" shape-rendering="crispEdges" />
<rect x="927.7" y="720.5" width="22.1" height="2.1" fill="#000" shape-rendering="crispEdges" />
<rect x="1017.7" y="720.5" width="104.1" height="2.1" fill="#000" shape-rendering="crispEdges" />
<rect x="978.0" y="720.5" width="12.0" height="2.1" fill="#000" shape-rendering="crispEdges" />
<rect x="933.1" y="774.8" width="3.4" height="78.5" fill="#000" shape-rendering="crispEdges" />
<rect x="981.8" y="721.7" width="3.0" height="131.6" fill="#000" shape-rendering="crispEdges" />
<rect x="1032.1" y="774.8" width="3.2" height="78.5" fill="#000" shape-rendering="crispEdges" />
<rect x="963.6" y="775.2" width="40.4" height="3.0" fill="#000" shape-rendering="crispEdges" />
<rect x="1121.6" y="721.6" width="5.9" height="131.7" fill="#000" shape-rendering="crispEdges" />
<rect x="1121.6" y="553.8" width="29.8" height="91.0" fill="#000" shape-rendering="crispEdges" />
<rect x="1121.6" y="731.7" width="29.8" height="122.1" fill="#000" shape-rendering="crispEdges" />
<rect x="1210.7" y="617.0" width="127.1" height="198.5" fill="#000" shape-rendering="crispEdges" />
<rect x="1372.6" y="617.0" width="54.0" height="7.8" fill="#000" shape-rendering="crispEdges" />
<rect x="1421.9" y="617.0" width="4.7" height="240.8" fill="#000" shape-rendering="crispEdges" />
<rect x="1427.0" y="616.7" width="83.7" height="3.4" fill="#000" shape-rendering="crispEdges" />
<rect x="1506.4" y="616.7" width="4.3" height="108.9" fill="#000" shape-rendering="crispEdges" />
<rect x="1427.0" y="722.7" width="49.3" height="2.9" fill="#000" shape-rendering="crispEdges" />
<rect x="1500.6" y="722.7" width="10.1" height="2.9" fill="#000" shape-rendering="crispEdges" />
<rect x="1394.2" y="390.7" width="149.4" height="3.4" fill="#000" shape-rendering="crispEdges" />
<rect x="1450.5" y="342.0" width="93.1" height="2.5" fill="#000" shape-rendering="crispEdges" />
<rect x="1450.5" y="342.0" width="2.9" height="21.8" fill="#000" shape-rendering="crispEdges" />
<rect x="1450.5" y="421.2" width="2.9" height="21.6" fill="#000" shape-rendering="crispEdges" />
<rect x="1450.5" y="387.2" width="2.9" height="10.1" fill="#000" shape-rendering="crispEdges" />
<rect x="1450.5" y="440.4" width="93.1" height="2.4" fill="#000" shape-rendering="crispEdges" />
<rect x="1394.2" y="552.2" width="149.4" height="4.1" fill="#000" shape-rendering="crispEdges" />
<rect x="1394.5" y="246.2" width="2.6" height="111.9" fill="#000" shape-rendering="crispEdges" />
<rect x="1394.5" y="426.2" width="2.6" height="136.6" fill="#000" shape-rendering="crispEdges" />
<rect x="1394.5" y="385.7" width="2.6" height="12.6" fill="#000" shape-rendering="crispEdges" />
<rect x="1394.5" y="609.2" width="2.6" height="7.6" fill="#000" shape-rendering="crispEdges" />
<path d="M842.0 324.5L842.0 447.0" stroke="#ffffff" stroke-width="1" fill="none"  shape-rendering="crispEdges"/>
<rect x="842.0" y="241.0" width="133.0" height="4.5" fill="#222933" stroke="#ffffff" stroke-width="1" shape-rendering="crispEdges" />
<path d="M842.0 243.2L975.0 243.2" stroke="#ffffff" stroke-width="0.8" fill="none"  shape-rendering="crispEdges"/>
<rect x="1002.0" y="241.0" width="60.0" height="4.5" fill="#222933" stroke="#ffffff" stroke-width="1" shape-rendering="crispEdges" />
<path d="M1002.0 243.2L1062.0 243.2" stroke="#ffffff" stroke-width="0.8" fill="none"  shape-rendering="crispEdges"/>
<path d="M1026.0 241.0L1026.0 245.5" stroke="#ffffff" stroke-width="1" fill="none"  shape-rendering="crispEdges"/>
<rect x="1112.4" y="241.0" width="59.6" height="4.5" fill="#222933" stroke="#ffffff" stroke-width="1" shape-rendering="crispEdges" />
<path d="M1112.4 243.2L1172.0 243.2" stroke="#ffffff" stroke-width="0.8" fill="none"  shape-rendering="crispEdges"/>
<path d="M1138.0 241.0L1138.0 245.5" stroke="#ffffff" stroke-width="1" fill="none"  shape-rendering="crispEdges"/>
<rect x="1196.0" y="241.0" width="127.0" height="4.5" fill="#222933" stroke="#ffffff" stroke-width="1" shape-rendering="crispEdges" />
<path d="M1196.0 243.2L1323.0 243.2" stroke="#ffffff" stroke-width="0.8" fill="none"  shape-rendering="crispEdges"/>
<rect x="1333.2" y="241.0" width="59.8" height="4.5" fill="#222933" stroke="#ffffff" stroke-width="1" shape-rendering="crispEdges" />
<path d="M1333.2 243.2L1393.0 243.2" stroke="#ffffff" stroke-width="0.8" fill="none"  shape-rendering="crispEdges"/>
<path d="M1359.0 241.0L1359.0 245.5" stroke="#ffffff" stroke-width="1" fill="none"  shape-rendering="crispEdges"/>
<rect x="1002.0" y="211.5" width="60.0" height="29.0" fill="none" stroke="#ffffff" stroke-width="1" shape-rendering="crispEdges" />
<rect x="1112.4" y="211.5" width="59.6" height="29.0" fill="none" stroke="#ffffff" stroke-width="1" shape-rendering="crispEdges" />
<rect x="1333.2" y="211.5" width="59.8" height="29.0" fill="none" stroke="#ffffff" stroke-width="1" shape-rendering="crispEdges" />
<rect x="835.0" y="248.7" width="6.0" height="51.1" fill="#222933" stroke="#ffffff" stroke-width="1" shape-rendering="crispEdges" />
<path d="M838.0 248.7L838.0 299.8" stroke="#ffffff" stroke-width="0.8" fill="none"  shape-rendering="crispEdges"/>
<rect x="836.5" y="450.3" width="5.0" height="59.3" fill="#222933" stroke="#ffffff" stroke-width="1" shape-rendering="crispEdges" />
<path d="M839.0 450.3L839.0 509.6" stroke="#ffffff" stroke-width="0.8" fill="none"  shape-rendering="crispEdges"/>
<path d="M836.5 483.2L841.5 483.2" stroke="#ffffff" stroke-width="1" fill="none"  shape-rendering="crispEdges"/>
<rect x="836.5" y="555.5" width="5.0" height="60.3" fill="#222933" stroke="#ffffff" stroke-width="1" shape-rendering="crispEdges" />
<path d="M839.0 555.5L839.0 615.8" stroke="#ffffff" stroke-width="0.8" fill="none"  shape-rendering="crispEdges"/>
<path d="M836.5 588.0L841.5 588.0" stroke="#ffffff" stroke-width="1" fill="none"  shape-rendering="crispEdges"/>
<rect x="835.0" y="638.8" width="6.0" height="94.8" fill="#222933" stroke="#ffffff" stroke-width="1" shape-rendering="crispEdges" />
<path d="M838.0 638.8L838.0 733.6" stroke="#ffffff" stroke-width="0.8" fill="none"  shape-rendering="crispEdges"/>
<rect x="836.5" y="767.3" width="5.0" height="59.2" fill="#222933" stroke="#ffffff" stroke-width="1" shape-rendering="crispEdges" />
<path d="M839.0 767.3L839.0 826.5" stroke="#ffffff" stroke-width="0.8" fill="none"  shape-rendering="crispEdges"/>
<path d="M836.5 796.5L841.5 796.5" stroke="#ffffff" stroke-width="1" fill="none"  shape-rendering="crispEdges"/>
<rect x="806.0" y="450.3" width="30.5" height="59.3" fill="none" stroke="#ffffff" stroke-width="1" shape-rendering="crispEdges" />
<rect x="806.0" y="555.5" width="30.5" height="60.3" fill="none" stroke="#ffffff" stroke-width="1" shape-rendering="crispEdges" />
<rect x="806.0" y="767.3" width="30.5" height="59.2" fill="none" stroke="#ffffff" stroke-width="1" shape-rendering="crispEdges" />
<path d="M838.0 251.0L838.0 298.0" stroke="#ffffff" stroke-width="1" fill="none" stroke-dasharray="5 3" shape-rendering="crispEdges"/>
<path d="M838.0 641.0L838.0 732.0" stroke="#ffffff" stroke-width="1" fill="none" stroke-dasharray="5 3" shape-rendering="crispEdges"/>
<rect x="1543.8" y="273.2" width="4.4" height="59.1" fill="#222933" stroke="#ffffff" stroke-width="1" shape-rendering="crispEdges" />
<path d="M1546.0 273.2L1546.0 332.3" stroke="#ffffff" stroke-width="0.8" fill="none"  shape-rendering="crispEdges"/>
<path d="M1543.8 300.0L1548.2 300.0" stroke="#ffffff" stroke-width="1" fill="none"  shape-rendering="crispEdges"/>
<rect x="1543.8" y="450.3" width="4.4" height="59.3" fill="#222933" stroke="#ffffff" stroke-width="1" shape-rendering="crispEdges" />
<path d="M1546.0 450.3L1546.0 509.6" stroke="#ffffff" stroke-width="0.8" fill="none"  shape-rendering="crispEdges"/>
<path d="M1543.8 477.5L1548.2 477.5" stroke="#ffffff" stroke-width="1" fill="none"  shape-rendering="crispEdges"/>
<rect x="1543.8" y="574.4" width="4.4" height="31.6" fill="#222933" stroke="#ffffff" stroke-width="1" shape-rendering="crispEdges" />
<path d="M1546.0 574.4L1546.0 606.0" stroke="#ffffff" stroke-width="0.8" fill="none"  shape-rendering="crispEdges"/>
<rect x="1543.8" y="682.4" width="4.4" height="60.0" fill="#222933" stroke="#ffffff" stroke-width="1" shape-rendering="crispEdges" />
<path d="M1546.0 682.4L1546.0 742.4" stroke="#ffffff" stroke-width="0.8" fill="none"  shape-rendering="crispEdges"/>
<path d="M1543.8 709.5L1548.2 709.5" stroke="#ffffff" stroke-width="1" fill="none"  shape-rendering="crispEdges"/>
<rect x="1548.2" y="273.2" width="30.6" height="59.1" fill="none" stroke="#ffffff" stroke-width="1" shape-rendering="crispEdges" />
<rect x="1548.2" y="450.3" width="30.6" height="59.3" fill="none" stroke="#ffffff" stroke-width="1" shape-rendering="crispEdges" />
<rect x="1548.2" y="682.4" width="30.6" height="60.0" fill="none" stroke="#ffffff" stroke-width="1" shape-rendering="crispEdges" />
<rect x="1046.2" y="853.8" width="59.8" height="4.2" fill="#222933" stroke="#ffffff" stroke-width="1" shape-rendering="crispEdges" />
<path d="M1046.2 855.9L1106.0 855.9" stroke="#ffffff" stroke-width="0.8" fill="none"  shape-rendering="crispEdges"/>
<path d="M1077.0 853.8L1077.0 858.0" stroke="#ffffff" stroke-width="1" fill="none"  shape-rendering="crispEdges"/>
<rect x="1151.6" y="853.8" width="57.4" height="4.2" fill="#222933" stroke="#ffffff" stroke-width="1" shape-rendering="crispEdges" />
<path d="M1151.6 855.9L1209.0 855.9" stroke="#ffffff" stroke-width="0.8" fill="none"  shape-rendering="crispEdges"/>
<rect x="1379.0" y="850.0" width="33.5" height="8.0" fill="#222933" stroke="#ffffff" stroke-width="1" shape-rendering="crispEdges" />
<path d="M1379.0 854.0L1412.5 854.0" stroke="#ffffff" stroke-width="0.8" fill="none"  shape-rendering="crispEdges"/>
<rect x="1477.5" y="853.8" width="60.2" height="4.2" fill="#222933" stroke="#ffffff" stroke-width="1" shape-rendering="crispEdges" />
<path d="M1477.5 855.9L1537.7 855.9" stroke="#ffffff" stroke-width="0.8" fill="none"  shape-rendering="crispEdges"/>
<path d="M1504.0 853.8L1504.0 858.0" stroke="#ffffff" stroke-width="1" fill="none"  shape-rendering="crispEdges"/>
<rect x="842.0" y="320.8" width="106.0" height="3.4" fill="#222933" stroke="#ffffff" stroke-width="1" shape-rendering="crispEdges" />
<path d="M842.0 322.5L948.0 322.5" stroke="#ffffff" stroke-width="0.8" fill="none"  shape-rendering="crispEdges"/>
<path d="M875.0 320.8L875.0 324.2" stroke="#ffffff" stroke-width="1" fill="none"  shape-rendering="crispEdges"/>
<path d="M907.0 320.8L907.0 324.2" stroke="#ffffff" stroke-width="1" fill="none"  shape-rendering="crispEdges"/>
<rect x="1262.5" y="320.8" width="69.5" height="3.4" fill="#222933" stroke="#ffffff" stroke-width="1" shape-rendering="crispEdges" />
<path d="M1262.5 322.5L1332.0 322.5" stroke="#ffffff" stroke-width="0.8" fill="none"  shape-rendering="crispEdges"/>
<path d="M1297.0 320.8L1297.0 324.2" stroke="#ffffff" stroke-width="1" fill="none"  shape-rendering="crispEdges"/>
<rect x="842.0" y="447.0" width="165.4" height="2.8" fill="#222933" stroke="#ffffff" stroke-width="1" shape-rendering="crispEdges" />
<path d="M842.0 448.4L1007.4 448.4" stroke="#ffffff" stroke-width="0.8" fill="none"  shape-rendering="crispEdges"/>
<rect x="874.4" y="251.4" width="14.4" height="14.6" fill="#222933" stroke="#6f747d" stroke-width="1" rx="4.2"/>
<path d="M873.6 250.6L875.2 252.2" stroke="#6f747d" stroke-width="1" fill="none" />
<path d="M888.0 250.6L889.6 252.2" stroke="#6f747d" stroke-width="1" fill="none" />
<path d="M873.6 265.2L875.2 266.8" stroke="#6f747d" stroke-width="1" fill="none" />
<path d="M888.0 265.2L889.6 266.8" stroke="#6f747d" stroke-width="1" fill="none" />
<rect x="850.3" y="275.6" width="14.7" height="15.1" fill="#222933" stroke="#6f747d" stroke-width="1" rx="4.2"/>
<path d="M849.5 274.8L851.1 276.4" stroke="#6f747d" stroke-width="1" fill="none" />
<path d="M864.2 274.8L865.8 276.4" stroke="#6f747d" stroke-width="1" fill="none" />
<path d="M849.5 289.9L851.1 291.5" stroke="#6f747d" stroke-width="1" fill="none" />
<path d="M864.2 289.9L865.8 291.5" stroke="#6f747d" stroke-width="1" fill="none" />
<rect x="874.4" y="299.0" width="14.4" height="15.4" fill="#222933" stroke="#6f747d" stroke-width="1" rx="4.2"/>
<path d="M873.6 298.2L875.2 299.8" stroke="#6f747d" stroke-width="1" fill="none" />
<path d="M888.0 298.2L889.6 299.8" stroke="#6f747d" stroke-width="1" fill="none" />
<path d="M873.6 313.6L875.2 315.2" stroke="#6f747d" stroke-width="1" fill="none" />
<path d="M888.0 313.6L889.6 315.2" stroke="#6f747d" stroke-width="1" fill="none" />
<rect x="898.0" y="275.6" width="14.2" height="15.1" fill="#222933" stroke="#6f747d" stroke-width="1" rx="4.2"/>
<path d="M897.2 274.8L898.8 276.4" stroke="#6f747d" stroke-width="1" fill="none" />
<path d="M911.4 274.8L913.0 276.4" stroke="#6f747d" stroke-width="1" fill="none" />
<path d="M897.2 289.9L898.8 291.5" stroke="#6f747d" stroke-width="1" fill="none" />
<path d="M911.4 289.9L913.0 291.5" stroke="#6f747d" stroke-width="1" fill="none" />
<rect x="861.2" y="262.4" width="40.5" height="40.2" fill="#222933" stroke="#6f747d" stroke-width="0.8" shape-rendering="crispEdges" />
<rect x="1284.5" y="251.6" width="14.4" height="14.4" fill="#222933" stroke="#6f747d" stroke-width="1" rx="4.2"/>
<path d="M1283.7 250.8L1285.3 252.4" stroke="#6f747d" stroke-width="1" fill="none" />
<path d="M1298.1 250.8L1299.7 252.4" stroke="#6f747d" stroke-width="1" fill="none" />
<path d="M1283.7 265.2L1285.3 266.8" stroke="#6f747d" stroke-width="1" fill="none" />
<path d="M1298.1 265.2L1299.7 266.8" stroke="#6f747d" stroke-width="1" fill="none" />
<rect x="1308.0" y="275.4" width="14.6" height="14.6" fill="#222933" stroke="#6f747d" stroke-width="1" rx="4.2"/>
<path d="M1307.2 274.6L1308.8 276.2" stroke="#6f747d" stroke-width="1" fill="none" />
<path d="M1321.8 274.6L1323.4 276.2" stroke="#6f747d" stroke-width="1" fill="none" />
<path d="M1307.2 289.2L1308.8 290.8" stroke="#6f747d" stroke-width="1" fill="none" />
<path d="M1321.8 289.2L1323.4 290.8" stroke="#6f747d" stroke-width="1" fill="none" />
<rect x="1284.5" y="299.0" width="14.4" height="15.0" fill="#222933" stroke="#6f747d" stroke-width="1" rx="4.2"/>
<path d="M1283.7 298.2L1285.3 299.8" stroke="#6f747d" stroke-width="1" fill="none" />
<path d="M1298.1 298.2L1299.7 299.8" stroke="#6f747d" stroke-width="1" fill="none" />
<path d="M1283.7 313.2L1285.3 314.8" stroke="#6f747d" stroke-width="1" fill="none" />
<path d="M1298.1 313.2L1299.7 314.8" stroke="#6f747d" stroke-width="1" fill="none" />
<rect x="1260.7" y="279.0" width="14.3" height="15.0" fill="#222933" stroke="#6f747d" stroke-width="1" rx="4.2"/>
<path d="M1259.9 278.2L1261.5 279.8" stroke="#6f747d" stroke-width="1" fill="none" />
<path d="M1274.2 278.2L1275.8 279.8" stroke="#6f747d" stroke-width="1" fill="none" />
<path d="M1259.9 293.2L1261.5 294.8" stroke="#6f747d" stroke-width="1" fill="none" />
<path d="M1274.2 293.2L1275.8 294.8" stroke="#6f747d" stroke-width="1" fill="none" />
<rect x="1271.7" y="263.0" width="40.1" height="39.3" fill="#222933" stroke="#6f747d" stroke-width="0.8" shape-rendering="crispEdges" />
<path d="M980.6 258.4L987.6 258.4A7.6 7.6 0 0 1 987.6 273.6L980.6 273.6Z" fill="#222933" stroke="#ffffff" stroke-width="1" />
<path d="M982.6 261.0L982.6 271.0" stroke="#ffffff" stroke-width="1" fill="none"  shape-rendering="crispEdges"/>
<path d="M980.6 266.0L986.6 266.0" stroke="#ffffff" stroke-width="1" fill="none"  shape-rendering="crispEdges"/>
<path d="M980.6 286.7L987.6 286.7A7.6 7.6 0 0 1 987.6 301.9L980.6 301.9Z" fill="#222933" stroke="#ffffff" stroke-width="1" />
<path d="M982.6 289.3L982.6 299.3" stroke="#ffffff" stroke-width="1" fill="none"  shape-rendering="crispEdges"/>
<path d="M980.6 294.3L986.6 294.3" stroke="#ffffff" stroke-width="1" fill="none"  shape-rendering="crispEdges"/>
<path d="M1191.6 258.4L1184.6 258.4A7.6 7.6 0 0 0 1184.6 273.6L1191.6 273.6Z" fill="#222933" stroke="#ffffff" stroke-width="1" />
<path d="M1189.6 261.0L1189.6 271.0" stroke="#ffffff" stroke-width="1" fill="none"  shape-rendering="crispEdges"/>
<path d="M1191.6 266.0L1185.6 266.0" stroke="#ffffff" stroke-width="1" fill="none"  shape-rendering="crispEdges"/>
<path d="M1191.6 287.0L1184.6 287.0A7.6 7.6 0 0 0 1184.6 302.2L1191.6 302.2Z" fill="#222933" stroke="#ffffff" stroke-width="1" />
<path d="M1189.6 289.6L1189.6 299.6" stroke="#ffffff" stroke-width="1" fill="none"  shape-rendering="crispEdges"/>
<path d="M1191.6 294.6L1185.6 294.6" stroke="#ffffff" stroke-width="1" fill="none"  shape-rendering="crispEdges"/>
<path d="M1058.0 293.1L1115.0 293.1" stroke="#ffffff" stroke-width="1.6" fill="none"  shape-rendering="crispEdges"/>
<rect x="1062.8" y="301.3" width="48.8" height="11.5" fill="#222933" stroke="#ffffff" stroke-width="1" rx="5.5"/>
<path d="M1076.0 301.5L1076.0 312.6" stroke="#ffffff" stroke-width="1" fill="none"  shape-rendering="crispEdges"/>
<path d="M1081.0 301.5L1081.0 312.6" stroke="#ffffff" stroke-width="1" fill="none"  shape-rendering="crispEdges"/>
<path d="M1093.0 301.5L1093.0 312.6" stroke="#ffffff" stroke-width="1" fill="none"  shape-rendering="crispEdges"/>
<path d="M1098.0 301.5L1098.0 312.6" stroke="#ffffff" stroke-width="1" fill="none"  shape-rendering="crispEdges"/>
<path d="M1077.8 256.7L1096.0 256.7" stroke="#ffffff" stroke-width="1" fill="none"  shape-rendering="crispEdges"/>
<path d="M1081.0 259.3L1092.0 259.3" stroke="#ffffff" stroke-width="1.4" fill="none"  shape-rendering="crispEdges"/>
<circle cx="1076.7" cy="256.7" r="1.2" fill="none" stroke="#ffffff" stroke-width="0.8"/>
<circle cx="1097.1" cy="256.7" r="1.2" fill="none" stroke="#ffffff" stroke-width="0.8"/>
<path d="M1077.8 283.2L1096.0 283.2" stroke="#ffffff" stroke-width="1" fill="none"  shape-rendering="crispEdges"/>
<path d="M1081.0 285.8L1092.0 285.8" stroke="#ffffff" stroke-width="1.4" fill="none"  shape-rendering="crispEdges"/>
<circle cx="1076.7" cy="283.2" r="1.2" fill="none" stroke="#ffffff" stroke-width="0.8"/>
<circle cx="1097.1" cy="283.2" r="1.2" fill="none" stroke="#ffffff" stroke-width="0.8"/>
<rect x="1315.6" y="331.0" width="13.8" height="14.7" fill="#222933" shape-rendering="crispEdges" />
<rect x="1265.4" y="345.7" width="66.6" height="50.0" fill="#222933" stroke="#6f747d" stroke-width="1.6" shape-rendering="crispEdges" />
<rect x="1315.5" y="348.7" width="14.5" height="20.0" fill="none" stroke="#6f747d" stroke-width="1" shape-rendering="crispEdges" />
<rect x="1315.5" y="372.7" width="14.5" height="20.0" fill="none" stroke="#6f747d" stroke-width="1" shape-rendering="crispEdges" />
<path d="M1308.0 345.7L1315.0 395.7" stroke="#6f747d" stroke-width="1" fill="none" />
<rect x="1315.6" y="398.2" width="13.8" height="13.9" fill="#222933" shape-rendering="crispEdges" />
<circle cx="1212.4" cy="399.1" r="13.8" fill="#222933"/>
<rect x="1273.0" y="426.5" width="59.0" height="19.8" fill="#222933" shape-rendering="crispEdges" />
<rect x="1253.9" y="426.8" width="18.1" height="19.5" fill="#222933" stroke="#ffffff" stroke-width="1.4" shape-rendering="crispEdges" />
<path d="M1253.9 426.8L1271 420.5L1272 426.8" fill="none" stroke="#ffffff" stroke-width="1" />
<circle cx="1302.6" cy="426.5" r="10.5" fill="#222933" stroke="#6f747d" stroke-width="1"/>
<path d="M1293 420 L1303 413 L1311 419" fill="none" stroke="#6f747d" stroke-width="1" />
<rect x="1170.3" y="422.4" width="29.5" height="23.9" fill="none" stroke="#6f747d" stroke-width="1" shape-rendering="crispEdges" />
<rect x="1174.8" y="422.4" width="20.5" height="23.9" fill="none" stroke="#6f747d" stroke-width="1" shape-rendering="crispEdges" />
<path d="M1174.8 440.3L1195.3 440.3" stroke="#6f747d" stroke-width="1" fill="none"  shape-rendering="crispEdges"/>
<rect x="1223.3" y="422.4" width="29.6" height="23.9" fill="none" stroke="#6f747d" stroke-width="1" shape-rendering="crispEdges" />
<rect x="1227.8" y="422.4" width="20.6" height="23.9" fill="none" stroke="#6f747d" stroke-width="1" shape-rendering="crispEdges" />
<path d="M1227.8 440.3L1248.4 440.3" stroke="#6f747d" stroke-width="1" fill="none"  shape-rendering="crispEdges"/>
<rect x="842.5" y="330.0" width="15.3" height="15.0" fill="none" stroke="#6f747d" stroke-width="1" shape-rendering="crispEdges" />
<rect x="842.5" y="345.5" width="65.5" height="50.1" fill="none" stroke="#6f747d" stroke-width="1.4" shape-rendering="crispEdges" />
<rect x="843.5" y="348.0" width="14.3" height="21.0" fill="none" stroke="#6f747d" stroke-width="1" shape-rendering="crispEdges" />
<rect x="843.5" y="373.0" width="14.3" height="21.0" fill="none" stroke="#6f747d" stroke-width="1" shape-rendering="crispEdges" />
<path d="M866.0 346.0L858.0 395.0" stroke="#6f747d" stroke-width="1" fill="none" />
<rect x="842.5" y="396.0" width="15.3" height="16.0" fill="none" stroke="#6f747d" stroke-width="1" shape-rendering="crispEdges" />
<path d="M844.0 400.0L855.0 390.0" stroke="#ffffff" stroke-width="1" fill="none" />
<circle cx="961.5" cy="398.7" r="14.0" fill="none" stroke="#6f747d" stroke-width="1"/>
<circle cx="870.7" cy="426.0" r="11.0" fill="none" stroke="#6f747d" stroke-width="1"/>
<path d="M868 415L880 424L877 429L866 419Z" fill="none" stroke="#6f747d" stroke-width="1" />
<path d="M842.0 426.0L860.0 426.0" stroke="#6f747d" stroke-width="1" fill="none"  shape-rendering="crispEdges"/>
<path d="M882.0 426.0L900.0 426.0" stroke="#6f747d" stroke-width="1" fill="none"  shape-rendering="crispEdges"/>
<rect x="900.4" y="426.0" width="20.0" height="21.0" fill="none" stroke="#ffffff" stroke-width="1.6" shape-rendering="crispEdges" />
<path d="M900.4 426L902 419.5L920.4 426" fill="none" stroke="#ffffff" stroke-width="1" />
<rect x="920.4" y="422.4" width="30.2" height="24.6" fill="none" stroke="#6f747d" stroke-width="1" shape-rendering="crispEdges" />
<rect x="924.9" y="422.4" width="21.2" height="24.6" fill="none" stroke="#6f747d" stroke-width="1" shape-rendering="crispEdges" />
<path d="M924.9 441.0L946.1 441.0" stroke="#6f747d" stroke-width="1" fill="none"  shape-rendering="crispEdges"/>
<rect x="973.0" y="422.4" width="30.6" height="24.6" fill="none" stroke="#6f747d" stroke-width="1" shape-rendering="crispEdges" />
<rect x="977.5" y="422.4" width="21.6" height="24.6" fill="none" stroke="#6f747d" stroke-width="1" shape-rendering="crispEdges" />
<path d="M977.5 441.0L999.1 441.0" stroke="#6f747d" stroke-width="1" fill="none"  shape-rendering="crispEdges"/>
<rect x="1225.2" y="492.4" width="99.8" height="79.1" fill="#222933" stroke="#ffffff" stroke-width="1" shape-rendering="crispEdges" />
<g transform="translate(1246.2 511.0) rotate(45)" fill="none" stroke="#6f747d" stroke-width="1"><rect x="-9.5" y="-9.5" width="19.0" height="19.0" rx="4"/><rect x="-7.0" y="-7.0" width="16.5" height="14.0" rx="3"/></g>
<g transform="translate(1302.6 511.0) rotate(45)" fill="none" stroke="#6f747d" stroke-width="1"><rect x="-9.5" y="-9.5" width="19.0" height="19.0" rx="4"/><rect x="-7.0" y="-7.0" width="16.5" height="14.0" rx="3"/></g>
<g transform="translate(1246.2 554.0) rotate(45)" fill="none" stroke="#6f747d" stroke-width="1"><rect x="-9.5" y="-9.5" width="19.0" height="19.0" rx="4"/><rect x="-7.0" y="-7.0" width="16.5" height="14.0" rx="3"/></g>
<g transform="translate(1302.6 554.0) rotate(45)" fill="none" stroke="#6f747d" stroke-width="1"><rect x="-9.5" y="-9.5" width="19.0" height="19.0" rx="4"/><rect x="-7.0" y="-7.0" width="16.5" height="14.0" rx="3"/></g>
<circle cx="1274.9" cy="532.0" r="14.0" fill="none" stroke="#6f747d" stroke-width="1"/>
<rect x="861.6" y="520.0" width="50.8" height="65.8" fill="#222933" stroke="#6f747d" stroke-width="1.6" shape-rendering="crispEdges" />
<path d="M861.6 537.5L912.4 544.0" stroke="#6f747d" stroke-width="1" fill="none" />
<rect x="864.6" y="523.3" width="20.5" height="15.3" fill="none" stroke="#6f747d" stroke-width="1" shape-rendering="crispEdges" />
<rect x="888.9" y="523.3" width="20.5" height="15.3" fill="none" stroke="#6f747d" stroke-width="1" shape-rendering="crispEdges" />
<rect x="846.3" y="522.7" width="14.5" height="14.3" fill="#222933" shape-rendering="crispEdges" />
<rect x="914.2" y="522.7" width="14.6" height="14.3" fill="#222933" shape-rendering="crispEdges" />
<rect x="1053.3" y="520.0" width="50.7" height="66.8" fill="#222933" stroke="#6f747d" stroke-width="1.6" shape-rendering="crispEdges" />
<path d="M1053.3 537.5L1104.0 544.0" stroke="#6f747d" stroke-width="1" fill="none" />
<rect x="1056.3" y="523.3" width="20.5" height="15.3" fill="none" stroke="#6f747d" stroke-width="1" shape-rendering="crispEdges" />
<rect x="1080.6" y="523.3" width="20.5" height="15.3" fill="none" stroke="#6f747d" stroke-width="1" shape-rendering="crispEdges" />
<rect x="1038.0" y="522.7" width="14.5" height="14.3" fill="#222933" shape-rendering="crispEdges" />
<rect x="1105.8" y="522.7" width="14.6" height="14.3" fill="#222933" shape-rendering="crispEdges" />
<rect x="861.6" y="786.4" width="50.8" height="65.6" fill="#222933" stroke="#6f747d" stroke-width="1.6" shape-rendering="crispEdges" />
<path d="M861.6 834.3L912.4 828.2" stroke="#6f747d" stroke-width="1" fill="none" />
<rect x="864.6" y="835.5" width="20.5" height="14.3" fill="none" stroke="#6f747d" stroke-width="1" shape-rendering="crispEdges" />
<rect x="888.9" y="835.5" width="20.5" height="14.3" fill="none" stroke="#6f747d" stroke-width="1" shape-rendering="crispEdges" />
<rect x="846.3" y="836.0" width="14.5" height="14.5" fill="#222933" shape-rendering="crispEdges" />
<rect x="914.2" y="836.0" width="14.6" height="14.5" fill="#222933" shape-rendering="crispEdges" />
<rect x="1053.3" y="785.0" width="50.7" height="67.0" fill="#222933" stroke="#6f747d" stroke-width="1.6" shape-rendering="crispEdges" />
<path d="M1053.3 834.3L1104.0 828.2" stroke="#6f747d" stroke-width="1" fill="none" />
<rect x="1056.3" y="835.5" width="20.5" height="14.3" fill="none" stroke="#6f747d" stroke-width="1" shape-rendering="crispEdges" />
<rect x="1080.6" y="835.5" width="20.5" height="14.3" fill="none" stroke="#6f747d" stroke-width="1" shape-rendering="crispEdges" />
<rect x="1038.0" y="836.0" width="14.5" height="14.5" fill="#222933" shape-rendering="crispEdges" />
<rect x="1105.8" y="836.0" width="14.6" height="14.5" fill="#222933" shape-rendering="crispEdges" />
<rect x="1468.9" y="246.5" width="50.3" height="66.3" fill="#222933" stroke="#6f747d" stroke-width="1.6" shape-rendering="crispEdges" />
<path d="M1468.9 270.5L1519.2 264.0" stroke="#6f747d" stroke-width="1" fill="none" />
<rect x="1471.9" y="249.8" width="20.5" height="15.3" fill="none" stroke="#6f747d" stroke-width="1" shape-rendering="crispEdges" />
<rect x="1496.2" y="249.8" width="20.5" height="15.3" fill="none" stroke="#6f747d" stroke-width="1" shape-rendering="crispEdges" />
<rect x="1453.6" y="249.2" width="14.5" height="14.3" fill="#222933" shape-rendering="crispEdges" />
<rect x="1521.0" y="249.2" width="14.6" height="14.3" fill="#222933" shape-rendering="crispEdges" />
<rect x="1468.9" y="484.7" width="50.3" height="66.0" fill="#222933" stroke="#6f747d" stroke-width="1.6" shape-rendering="crispEdges" />
<path d="M1468.9 526.2L1519.2 533.2" stroke="#6f747d" stroke-width="1" fill="none" />
<rect x="1471.9" y="534.2" width="20.5" height="14.3" fill="none" stroke="#6f747d" stroke-width="1" shape-rendering="crispEdges" />
<rect x="1496.2" y="534.2" width="20.5" height="14.3" fill="none" stroke="#6f747d" stroke-width="1" shape-rendering="crispEdges" />
<rect x="1453.6" y="534.7" width="14.5" height="14.5" fill="#222933" shape-rendering="crispEdges" />
<rect x="1521.0" y="534.7" width="14.6" height="14.5" fill="#222933" shape-rendering="crispEdges" />
<rect x="844.3" y="612.0" width="37.9" height="17.4" fill="#222933" stroke="#ffffff" stroke-width="1.6" shape-rendering="crispEdges" />
<path d="M863.2 612.0L863.2 629.4" stroke="#ffffff" stroke-width="1.6" fill="none"  shape-rendering="crispEdges"/>
<path d="M844.3 612L863.25 603.6L882.2 612" fill="none" stroke="#ffffff" stroke-width="1" />
<path d="M863.2 612.0L863.2 603.6" stroke="#ffffff" stroke-width="1" fill="none"  shape-rendering="crispEdges"/>
<rect x="1079.5" y="634.5" width="41.0" height="16.0" fill="#222933" stroke="#ffffff" stroke-width="1.6" shape-rendering="crispEdges" />
<path d="M1100.0 634.5L1100.0 650.5" stroke="#ffffff" stroke-width="1.6" fill="none"  shape-rendering="crispEdges"/>
<path d="M1079.5 634.5L1100.0 626.1L1120.5 634.5" fill="none" stroke="#ffffff" stroke-width="1" />
<path d="M1100.0 634.5L1100.0 626.1" stroke="#ffffff" stroke-width="1" fill="none"  shape-rendering="crispEdges"/>
<rect x="844.3" y="743.0" width="37.9" height="18.6" fill="#222933" stroke="#ffffff" stroke-width="1.6" shape-rendering="crispEdges" />
<path d="M863.2 743.0L863.2 761.6" stroke="#ffffff" stroke-width="1.6" fill="none"  shape-rendering="crispEdges"/>
<path d="M844.3 761.6L863.25 768.8000000000001L882.2 761.6" fill="none" stroke="#ffffff" stroke-width="1" />
<path d="M863.2 761.6L863.2 768.8" stroke="#ffffff" stroke-width="1" fill="none"  shape-rendering="crispEdges"/>
<rect x="1079.5" y="726.4" width="41.0" height="17.9" fill="#222933" stroke="#ffffff" stroke-width="1.6" shape-rendering="crispEdges" />
<path d="M1100.0 726.4L1100.0 744.3" stroke="#ffffff" stroke-width="1.6" fill="none"  shape-rendering="crispEdges"/>
<path d="M1079.5 744.3L1100.0 751.5L1120.5 744.3" fill="none" stroke="#ffffff" stroke-width="1" />
<path d="M1100.0 744.3L1100.0 751.5" stroke="#ffffff" stroke-width="1" fill="none"  shape-rendering="crispEdges"/>
<rect x="1403.3" y="246.5" width="20.7" height="39.1" fill="#222933" stroke="#ffffff" stroke-width="1.6" shape-rendering="crispEdges" />
<path d="M1403.3 266.1L1424.0 266.1" stroke="#ffffff" stroke-width="1.6" fill="none"  shape-rendering="crispEdges"/>
<path d="M1424 246.5L1430.7 266.05L1424 285.6" fill="none" stroke="#ffffff" stroke-width="1" />
<path d="M1424.0 266.1L1430.7 266.1" stroke="#ffffff" stroke-width="1" fill="none"  shape-rendering="crispEdges"/>
<rect x="1403.3" y="513.8" width="20.7" height="38.2" fill="#222933" stroke="#ffffff" stroke-width="1.6" shape-rendering="crispEdges" />
<path d="M1403.3 532.9L1424.0 532.9" stroke="#ffffff" stroke-width="1.6" fill="none"  shape-rendering="crispEdges"/>
<path d="M1424 513.8L1430.7 532.9L1424 552" fill="none" stroke="#ffffff" stroke-width="1" />
<path d="M1424.0 532.9L1430.7 532.9" stroke="#ffffff" stroke-width="1" fill="none"  shape-rendering="crispEdges"/>
<rect x="967.1" y="572.5" width="33.1" height="18.4" fill="#222933" stroke="#ffffff" stroke-width="1" rx="9.2"/>
<path d="M973.5 581.7H981M986 581.7H993.5M976.5 578.7L973.5 581.7L976.5 584.7M990.5 578.7L993.5 581.7L990.5 584.7M979 575.7V587.7M988 575.7V587.7" fill="none" stroke="#ffffff" stroke-width="1" />
<rect x="967.1" y="785.0" width="33.1" height="18.4" fill="#222933" stroke="#ffffff" stroke-width="1" rx="9.2"/>
<path d="M973.5 794.2H981M986 794.2H993.5M976.5 791.2L973.5 794.2L976.5 797.2M990.5 791.2L993.5 794.2L990.5 797.2M979 788.2V800.2M988 788.2V800.2" fill="none" stroke="#ffffff" stroke-width="1" />
<rect x="959.2" y="551.6" width="49.1" height="11.4" fill="#222933" stroke="#ffffff" stroke-width="1" rx="5.5"/>
<path d="M973.0 551.8L973.0 562.8" stroke="#ffffff" stroke-width="1" fill="none"  shape-rendering="crispEdges"/>
<path d="M978.0 551.8L978.0 562.8" stroke="#ffffff" stroke-width="1" fill="none"  shape-rendering="crispEdges"/>
<path d="M989.0 551.8L989.0 562.8" stroke="#ffffff" stroke-width="1" fill="none"  shape-rendering="crispEdges"/>
<path d="M994.0 551.8L994.0 562.8" stroke="#ffffff" stroke-width="1" fill="none"  shape-rendering="crispEdges"/>
<rect x="959.6" y="810.9" width="48.8" height="10.7" fill="#222933" stroke="#ffffff" stroke-width="1" rx="5.5"/>
<path d="M973.0 811.0L973.0 821.4" stroke="#ffffff" stroke-width="1" fill="none"  shape-rendering="crispEdges"/>
<path d="M978.0 811.0L978.0 821.4" stroke="#ffffff" stroke-width="1" fill="none"  shape-rendering="crispEdges"/>
<path d="M989.0 811.0L989.0 821.4" stroke="#ffffff" stroke-width="1" fill="none"  shape-rendering="crispEdges"/>
<path d="M994.0 811.0L994.0 821.4" stroke="#ffffff" stroke-width="1" fill="none"  shape-rendering="crispEdges"/>
<path d="M936.3 542.5L981.6 542.5" stroke="#ffffff" stroke-width="1" fill="none"  shape-rendering="crispEdges"/>
<path d="M985.0 542.5L1031.9 542.5" stroke="#ffffff" stroke-width="1" fill="none"  shape-rendering="crispEdges"/>
<path d="M936.7 829.4L1031.9 829.4" stroke="#ffffff" stroke-width="1" fill="none"  shape-rendering="crispEdges"/>
<path d="M974.5 530.1L992.8 530.1" stroke="#ffffff" stroke-width="1" fill="none"  shape-rendering="crispEdges"/>
<path d="M978.0 532.5L989.0 532.5" stroke="#ffffff" stroke-width="1.4" fill="none"  shape-rendering="crispEdges"/>
<circle cx="973.4" cy="530.1" r="1.2" fill="none" stroke="#ffffff" stroke-width="0.8"/>
<circle cx="993.8" cy="530.1" r="1.2" fill="none" stroke="#ffffff" stroke-width="0.8"/>
<path d="M974.5 841.0L992.8 841.0" stroke="#ffffff" stroke-width="1" fill="none"  shape-rendering="crispEdges"/>
<path d="M978.0 843.4L989.0 843.4" stroke="#ffffff" stroke-width="1.4" fill="none"  shape-rendering="crispEdges"/>
<circle cx="973.4" cy="841.0" r="1.2" fill="none" stroke="#ffffff" stroke-width="0.8"/>
<circle cx="993.8" cy="841.0" r="1.2" fill="none" stroke="#ffffff" stroke-width="0.8"/>
<path d="M1465.7 345.2A8 8 0 1 0 1478.9 345.2Z" fill="#222933" stroke="#ffffff" stroke-width="1" />
<path d="M1468.5 349.5h7.6M1472.3 346v7" fill="none" stroke="#ffffff" stroke-width="1" />
<path d="M1465.9 439.8A8 8 0 1 1 1478.7 439.8Z" fill="#222933" stroke="#ffffff" stroke-width="1" />
<path d="M1468.5 435.4h7.6M1472.3 431.5v7" fill="none" stroke="#ffffff" stroke-width="1" />
<path d="M1496 345.5V357.5A5.5 5.5 0 0 0 1507 357.5V345.5Z" fill="#222933" stroke="none" stroke-width="1" />
<path d="M1496.0 349.5L1507.0 349.5" stroke="#ffffff" stroke-width="1" fill="none"  shape-rendering="crispEdges"/>
<path d="M1496.0 353.5L1507.0 353.5" stroke="#ffffff" stroke-width="1" fill="none"  shape-rendering="crispEdges"/>
<path d="M1496 439.8V422.5A5.5 5.5 0 0 1 1507 422.5V439.8Z" fill="#222933" stroke="none" stroke-width="1" />
<path d="M1496.0 428.0L1507.0 428.0" stroke="#ffffff" stroke-width="1" fill="none"  shape-rendering="crispEdges"/>
<path d="M1496.0 433.0L1507.0 433.0" stroke="#ffffff" stroke-width="1" fill="none"  shape-rendering="crispEdges"/>
<path d="M1516.3 345.0L1516.3 440.0" stroke="#ffffff" stroke-width="1" fill="none"  shape-rendering="crispEdges"/>
<path d="M1529.0 347.0L1531.0 356.0" stroke="#ffffff" stroke-width="1" fill="none" />
<path d="M1529.0 437.0L1531.0 428.0" stroke="#ffffff" stroke-width="1" fill="none" />
<rect x="1484.2" y="556.8" width="59.2" height="19.9" fill="#222933" shape-rendering="crispEdges" />
<circle cx="1511.9" cy="574.5" r="10.5" fill="#222933" stroke="#6f747d" stroke-width="1"/>
<path d="M1503 580Q1512 576 1521 580" fill="none" stroke="#6f747d" stroke-width="1" />
<path d="M1428.5 669.6L1435.5 669.6A7.6 7.6 0 0 1 1435.5 684.8L1428.5 684.8Z" fill="#222933" stroke="#ffffff" stroke-width="1" />
<path d="M1430.5 672.2L1430.5 682.2" stroke="#ffffff" stroke-width="1" fill="none"  shape-rendering="crispEdges"/>
<path d="M1428.5 677.2L1434.5 677.2" stroke="#ffffff" stroke-width="1" fill="none"  shape-rendering="crispEdges"/>
<path d="M1428.5 696.4L1435.5 696.4A7.6 7.6 0 0 1 1435.5 711.6L1428.5 711.6Z" fill="#222933" stroke="#ffffff" stroke-width="1" />
<path d="M1430.5 699.0L1430.5 709.0" stroke="#ffffff" stroke-width="1" fill="none"  shape-rendering="crispEdges"/>
<path d="M1428.5 704.0L1434.5 704.0" stroke="#ffffff" stroke-width="1" fill="none"  shape-rendering="crispEdges"/>
<rect x="1484.7" y="671.9" width="21.3" height="11.1" fill="#222933" stroke="#ffffff" stroke-width="1" rx="2"/>
<path d="M1494.0 672.0L1494.0 683.0" stroke="#ffffff" stroke-width="1" fill="none"  shape-rendering="crispEdges"/>
<path d="M1498.0 672.0L1498.0 683.0" stroke="#ffffff" stroke-width="1" fill="none"  shape-rendering="crispEdges"/>
<path d="M1502.0 672.0L1502.0 683.0" stroke="#ffffff" stroke-width="1" fill="none"  shape-rendering="crispEdges"/>
<path d="M1450.3 648.4L1483.2 648.4" stroke="#ffffff" stroke-width="1" fill="none"  shape-rendering="crispEdges"/>
<path d="M1453.0 622.0L1453.0 630.0" stroke="#ffffff" stroke-width="1" fill="none"  shape-rendering="crispEdges"/>
<path d="M1477.0 622.0L1477.0 630.0" stroke="#ffffff" stroke-width="1" fill="none"  shape-rendering="crispEdges"/>
<rect x="1427.8" y="727.7" width="18.7" height="18.2" fill="#222933" stroke="#ffffff" stroke-width="1.4" shape-rendering="crispEdges" />
<path d="M1446.5 727.7L1453.6 745.9L1446.5 745.9" fill="none" stroke="#ffffff" stroke-width="1" />
<rect x="1430.7" y="748.7" width="14.9" height="14.4" fill="#222933" shape-rendering="crispEdges" />
<rect x="1428.7" y="765.0" width="66.6" height="50.3" fill="#222933" stroke="#6f747d" stroke-width="1.6" shape-rendering="crispEdges" />
<rect x="1431.2" y="767.5" width="15.3" height="19.5" fill="none" stroke="#6f747d" stroke-width="1" shape-rendering="crispEdges" />
<rect x="1431.2" y="792.8" width="15.3" height="20.0" fill="none" stroke="#6f747d" stroke-width="1" shape-rendering="crispEdges" />
<path d="M1446.7 765.0L1453.7 815.3" stroke="#6f747d" stroke-width="1" fill="none" />
<rect x="1430.7" y="817.0" width="14.9" height="14.0" fill="#222933" shape-rendering="crispEdges" />
<rect x="1427.8" y="833.4" width="18.7" height="18.6" fill="#222933" stroke="#ffffff" stroke-width="1.4" shape-rendering="crispEdges" />
<path d="M1446.5 852L1453.6 833.4L1446.5 833.4" fill="none" stroke="#ffffff" stroke-width="1" />
<g transform="translate(1523.4 832.8) rotate(45)" fill="none" stroke="#6f747d" stroke-width="1"><rect x="-13" y="-13" width="26" height="26"/><path d="M-10 -13L-10 10L13 10"/></g>
<rect x="1218.5" y="625.4" width="80.3" height="87.1" fill="#2020e0" shape-rendering="crispEdges" />
<path d="M1218.5 629.2L1298.8 629.2" stroke="#ffffff" stroke-width="1" fill="none"  shape-rendering="crispEdges"/>
<path d="M1218.5 705.7L1298.8 705.7" stroke="#ffffff" stroke-width="1" fill="none"  shape-rendering="crispEdges"/>
<rect x="1218.5" y="720.6" width="80.3" height="86.8" fill="#2020e0" shape-rendering="crispEdges" />
<path d="M1218.5 724.4L1298.8 724.4" stroke="#ffffff" stroke-width="1" fill="none"  shape-rendering="crispEdges"/>
<path d="M1218.5 800.6L1298.8 800.6" stroke="#ffffff" stroke-width="1" fill="none"  shape-rendering="crispEdges"/>
<rect x="1306.5" y="625.4" width="21.0" height="182.0" fill="#2020e0" stroke="#ffffff" stroke-width="1" shape-rendering="crispEdges" />
<rect x="1209.5" y="650.8" width="9.1" height="32.5" fill="#2020e0" shape-rendering="crispEdges" />
<rect x="1220.4" y="652.7" width="4.8" height="29.6" fill="#2020e0" stroke="#ffffff" stroke-width="1" shape-rendering="crispEdges" />
<path d="M1210.0 650.8L1218.5 652.3" stroke="#ffffff" stroke-width="1" fill="none" />
<path d="M1210.0 683.3L1218.5 681.8" stroke="#ffffff" stroke-width="1" fill="none" />
<rect x="1209.5" y="748.7" width="9.1" height="32.5" fill="#2020e0" shape-rendering="crispEdges" />
<rect x="1220.4" y="750.6" width="4.8" height="29.6" fill="#2020e0" stroke="#ffffff" stroke-width="1" shape-rendering="crispEdges" />
<path d="M1210.0 748.7L1218.5 750.2" stroke="#ffffff" stroke-width="1" fill="none" />
<path d="M1210.0 781.2L1218.5 779.7" stroke="#ffffff" stroke-width="1" fill="none" />
<rect x="1225.2" y="646.4" width="65.6" height="43.2" fill="none" stroke="#ffffff" stroke-width="1" shape-rendering="crispEdges" />
<path d="M1225.2 646.4L1290.8 689.6" stroke="#ffffff" stroke-width="1" fill="none" />
<path d="M1225.2 689.6L1290.8 646.4" stroke="#ffffff" stroke-width="1" fill="none" />
<rect x="1225.2" y="743.6" width="65.6" height="43.0" fill="none" stroke="#ffffff" stroke-width="1" shape-rendering="crispEdges" />
<path d="M1225.2 743.6L1290.8 786.6" stroke="#ffffff" stroke-width="1" fill="none" />
<path d="M1225.2 786.6L1290.8 743.6" stroke="#ffffff" stroke-width="1" fill="none" />
<rect x="1063.3" y="325.7" width="20.3" height="119.9" fill="none" stroke="#ffffff" stroke-width="1" shape-rendering="crispEdges" />
<rect x="1089.4" y="325.7" width="21.2" height="119.9" fill="none" stroke="#ffffff" stroke-width="1" shape-rendering="crispEdges" />
<rect x="1048.0" y="358.6" width="10.0" height="49.7" fill="#222933" stroke="#ffffff" stroke-width="1" shape-rendering="crispEdges" />
<rect x="1051.5" y="375.0" width="5.0" height="17.0" fill="none" stroke="#ffffff" stroke-width="1" shape-rendering="crispEdges" />
<path d="M1054.0 361.0L1054.0 406.0" stroke="#ffffff" stroke-width="1" fill="none"  shape-rendering="crispEdges"/>
<rect x="1116.3" y="358.6" width="8.0" height="49.7" fill="#222933" stroke="#ffffff" stroke-width="1" shape-rendering="crispEdges" />
<rect x="1117.5" y="375.0" width="5.0" height="17.0" fill="none" stroke="#ffffff" stroke-width="1" shape-rendering="crispEdges" />
<path d="M1120.0 361.0L1120.0 406.0" stroke="#ffffff" stroke-width="1" fill="none"  shape-rendering="crispEdges"/>
<rect x="982.0" y="516.0" width="3.0" height="138.0" fill="#000" shape-rendering="crispEdges" />
<rect x="982.0" y="723.0" width="3.0" height="129.0" fill="#000" shape-rendering="crispEdges" />
<rect x="1085.2" y="247.0" width="2.8" height="74.0" fill="#000" shape-rendering="crispEdges" />
<rect x="1128.5" y="561.4" width="16.0" height="76.0" fill="#2020e0" stroke="#ffffff" stroke-width="1" shape-rendering="crispEdges" />
<rect x="1128.5" y="738.0" width="16.0" height="115.3" fill="#2020e0" stroke="#ffffff" stroke-width="1" shape-rendering="crispEdges" />
<path d="M973 324.3L973 297Q953 299 948 324.3M970.8 324.3L970.8 297M988.3 324.5L988.3 357L1003 353L1016 339L1020.3 325.5L1025 339L1038 353L1052 357L1052 324.5M990.3 324.5L990.3 356.5M1050 324.5L1050 356.5M1120 324.5L1120 356.7L1136 352.5L1148.5 339L1153 325.2L1157.5 339L1170 352.5L1185 356.7L1185 324.5M1122 324.5L1122 356M1183 324.5L1183 356M1197.9 324.3L1197.9 296.5L1208 299L1217 310L1222.3 324.3M1200 324.3L1200 297M1054 447L1054 410.6L1038 414.5L1026 426.8L1021.7 445L1016 433L1008.4 431.2L1008.4 447M1052 447L1052 411M992 434L1002 441L1003.5 446M1001 441.5a2 2.5 0 1 0 4 1M1118.5 447L1118.5 410.6L1134 414.5L1146 426.8L1151 444.5L1156 434L1164.5 431.5L1164.5 447M1120.5 447L1120.5 411M1181 433L1173 441L1171 446M1397 358.3L1413 362L1423 373L1425.5 385.5L1397 385.5M1397 383.6L1425.5 383.6M1397 398.7L1425.5 398.7L1423 411L1413 422L1397 425.9M1397 400.6L1425.5 400.6M1452 364L1466 367L1475.5 377L1478.4 387.3L1452 387.3M1452 389L1478 389M1452 396.8L1478.4 396.8L1475.5 407L1466 417.5L1452 421M1452 395.2L1478 395.2M938.6 597L938.6 569.6L950 572L959 581L963.4 597M1028.4 597L1028.4 569.6L1017 572L1009 581L1005.5 597M938.6 776.5L938.6 802.3L950 800L959 791L963.4 777M1028.4 776.5L1028.4 802.3L1017 800L1009 791L1004.2 777M977.8 654L977.8 625L966 627.5L955 637L950 654M990.2 654L990.2 625L1002 627.5L1012.5 637L1017.5 654M975.8 654L975.8 625.5M992.2 654L992.2 625.5M977.8 722L977.8 751.2L966 748.5L955 739L950 722M990.2 722L990.2 751.2L1002 748.5L1012.5 739L1017.5 722M975.8 722L975.8 750.7M992.2 722L992.2 750.7M922.7 660.4L895 660.4L898 671L906 680L921.4 687.1L906 694L898 703L895 713.9L922.7 713.9M922.7 662.4L896 662.4M922.7 712L896 712M1340.5 619.3L1340.5 653.3L1354 650L1365 639L1370.5 619M1342.5 619.3L1342.5 652.8M1328.4 817.6L1345 821L1358 832L1364.8 848.2L1328.4 848.2M1396.5 562.6L1433.9 562.6L1430 578.2L1418.2 590.7L1399 595.8L1408.7 599.3L1412.5 609.2L1396.5 609.2M1396.5 564.6L1433 564.6M1396.5 607.4L1412 607.4M1500.4 722.5L1500.4 697.7L1490 700L1480.5 709L1476.5 722.5M1498.4 722.5L1498.4 698" fill="none" stroke="#ffffff" stroke-width="1.25" stroke-linejoin="round"/>
<text x="857.0" y="267.9" font-size="12.8" textLength="100.1" lengthAdjust="spacingAndGlyphs" fill="#fff" stroke="#fff" stroke-width=".3">PREMIUM BALCONY 1</text>
<rect x="884.1" y="273.6" width="46.9" height="10.9" fill="none" stroke="#ffffff" stroke-width="1" shape-rendering="crispEdges" />
<text x="892.4" y="282.6" font-size="12.8" textLength="28.7" lengthAdjust="spacingAndGlyphs" fill="#fff" stroke="#fff" stroke-width=".3">L7-003</text>
<text x="998.8" y="269.8" font-size="12.8" textLength="70.4" lengthAdjust="spacingAndGlyphs" fill="#fff" stroke="#fff" stroke-width=".3">PREMIUM E/S 1</text>
<rect x="1011.2" y="275.5" width="46.9" height="10.9" fill="none" stroke="#ffffff" stroke-width="1" shape-rendering="crispEdges" />
<text x="1019.5" y="284.5" font-size="12.8" textLength="28.7" lengthAdjust="spacingAndGlyphs" fill="#fff" stroke="#fff" stroke-width=".3">L7-002</text>
<text x="1096.4" y="267.9" font-size="12.8" textLength="69.9" lengthAdjust="spacingAndGlyphs" fill="#fff" stroke="#fff" stroke-width=".3">PREMIUM E/S 2</text>
<rect x="1108.2" y="273.6" width="46.8" height="10.9" fill="none" stroke="#ffffff" stroke-width="1" shape-rendering="crispEdges" />
<text x="1116.5" y="282.6" font-size="12.8" textLength="28.6" lengthAdjust="spacingAndGlyphs" fill="#fff" stroke="#fff" stroke-width=".3">L7-005</text>
<text x="1208.0" y="267.9" font-size="12.8" textLength="100.0" lengthAdjust="spacingAndGlyphs" fill="#fff" stroke="#fff" stroke-width=".3">PREMIUM BALCONY 2</text>
<rect x="1236.1" y="273.6" width="46.9" height="10.9" fill="none" stroke="#ffffff" stroke-width="1" shape-rendering="crispEdges" />
<text x="1244.4" y="282.6" font-size="12.8" textLength="28.7" lengthAdjust="spacingAndGlyphs" fill="#fff" stroke="#fff" stroke-width=".3">L7-006</text>
<text x="1171.0" y="365.4" font-size="12.8" textLength="74.7" lengthAdjust="spacingAndGlyphs" fill="#fff" stroke="#fff" stroke-width=".3">PREMIUM BED 2</text>
<rect x="1186.4" y="372.6" width="46.5" height="10.9" fill="none" stroke="#ffffff" stroke-width="1" shape-rendering="crispEdges" />
<text x="1194.7" y="381.6" font-size="12.8" textLength="28.3" lengthAdjust="spacingAndGlyphs" fill="#fff" stroke="#fff" stroke-width=".3">L7-004</text>
<text x="1463.1" y="283.7" font-size="12.8" textLength="27.4" lengthAdjust="spacingAndGlyphs" fill="#fff" stroke="#fff" stroke-width=".3">BED 6</text>
<rect x="1454.2" y="289.4" width="46.6" height="10.9" fill="none" stroke="#ffffff" stroke-width="1" shape-rendering="crispEdges" />
<text x="1462.5" y="298.4" font-size="12.8" textLength="28.4" lengthAdjust="spacingAndGlyphs" fill="#fff" stroke="#fff" stroke-width=".3">L7-019</text>
<text x="1484.2" y="354.4" font-size="12.8" textLength="22.8" lengthAdjust="spacingAndGlyphs" fill="#fff" stroke="#fff" stroke-width=".3">E/S 6</text>
<rect x="1473.3" y="360.6" width="46.7" height="10.9" fill="none" stroke="#ffffff" stroke-width="1" shape-rendering="crispEdges" />
<text x="1481.6" y="369.6" font-size="12.8" textLength="28.5" lengthAdjust="spacingAndGlyphs" fill="#fff" stroke="#fff" stroke-width=".3">L7-020</text>
<text x="1478.4" y="408.3" font-size="12.8" textLength="23.0" lengthAdjust="spacingAndGlyphs" fill="#fff" stroke="#fff" stroke-width=".3">E/S 5</text>
<rect x="1467.5" y="415.4" width="46.3" height="10.9" fill="none" stroke="#ffffff" stroke-width="1" shape-rendering="crispEdges" />
<text x="1475.8" y="424.4" font-size="12.8" textLength="28.1" lengthAdjust="spacingAndGlyphs" fill="#fff" stroke="#fff" stroke-width=".3">L7-018</text>
<text x="1467.0" y="479.4" font-size="12.8" textLength="27.3" lengthAdjust="spacingAndGlyphs" fill="#fff" stroke="#fff" stroke-width=".3">BED 5</text>
<rect x="1458.4" y="485.1" width="46.8" height="11.1" fill="none" stroke="#ffffff" stroke-width="1" shape-rendering="crispEdges" />
<text x="1466.7" y="494.3" font-size="12.8" textLength="28.6" lengthAdjust="spacingAndGlyphs" fill="#fff" stroke="#fff" stroke-width=".3">L7-017</text>
<text x="1160.2" y="495.6" font-size="12.8" textLength="51.6" lengthAdjust="spacingAndGlyphs" fill="#fff" stroke="#fff" stroke-width=".3">CORRIDOR</text>
<rect x="1163.0" y="501.4" width="47.0" height="10.9" fill="none" stroke="#ffffff" stroke-width="1" shape-rendering="crispEdges" />
<text x="1171.3" y="510.4" font-size="12.8" textLength="28.8" lengthAdjust="spacingAndGlyphs" fill="#fff" stroke="#fff" stroke-width=".3">L7-028</text>
<text x="995.4" y="535.2" font-size="12.8" textLength="22.5" lengthAdjust="spacingAndGlyphs" fill="#fff" stroke="#fff" stroke-width=".3">E/S 2</text>
<rect x="984.5" y="542.5" width="45.8" height="10.5" fill="none" stroke="#ffffff" stroke-width="1" shape-rendering="crispEdges" />
<text x="992.8" y="551.1" font-size="12.8" textLength="27.6" lengthAdjust="spacingAndGlyphs" fill="#fff" stroke="#fff" stroke-width=".3">L7-012</text>
<text x="951.0" y="548.6" font-size="12.8" textLength="22.6" lengthAdjust="spacingAndGlyphs" fill="#fff" stroke="#fff" stroke-width=".3">E/S 1</text>
<rect x="940.5" y="554.3" width="45.0" height="11.1" fill="none" stroke="#ffffff" stroke-width="1" shape-rendering="crispEdges" />
<text x="948.8" y="563.5" font-size="12.8" textLength="26.8" lengthAdjust="spacingAndGlyphs" fill="#fff" stroke="#fff" stroke-width=".3">L7-010</text>
<text x="874.9" y="576.6" font-size="12.8" textLength="26.8" lengthAdjust="spacingAndGlyphs" fill="#fff" stroke="#fff" stroke-width=".3">BED 1</text>
<rect x="866.0" y="582.6" width="46.8" height="10.9" fill="none" stroke="#ffffff" stroke-width="1" shape-rendering="crispEdges" />
<text x="874.3" y="591.6" font-size="12.8" textLength="28.6" lengthAdjust="spacingAndGlyphs" fill="#fff" stroke="#fff" stroke-width=".3">L7-009</text>
<text x="1055.2" y="576.6" font-size="12.8" textLength="27.3" lengthAdjust="spacingAndGlyphs" fill="#fff" stroke="#fff" stroke-width=".3">BED 2</text>
<rect x="1046.2" y="582.6" width="46.7" height="10.9" fill="none" stroke="#ffffff" stroke-width="1" shape-rendering="crispEdges" />
<text x="1054.5" y="591.6" font-size="12.8" textLength="28.5" lengthAdjust="spacingAndGlyphs" fill="#fff" stroke="#fff" stroke-width=".3">L7-011</text>
<text x="1127.7" y="587.7" font-size="12.8" textLength="28.3" lengthAdjust="spacingAndGlyphs" fill="#fff" stroke="#fff" stroke-width=".3">RISER</text>
<rect x="1119.1" y="593.5" width="46.9" height="10.8" fill="none" stroke="#ffffff" stroke-width="1" shape-rendering="crispEdges" />
<text x="1127.4" y="602.4" font-size="12.8" textLength="28.7" lengthAdjust="spacingAndGlyphs" fill="#fff" stroke="#fff" stroke-width=".3">L7-025</text>
<text x="847.2" y="675.6" font-size="12.8" textLength="53.7" lengthAdjust="spacingAndGlyphs" fill="#fff" stroke="#fff" stroke-width=".3">BALCONY X</text>
<rect x="852.0" y="681.4" width="46.8" height="10.9" fill="none" stroke="#ffffff" stroke-width="1" shape-rendering="crispEdges" />
<text x="860.3" y="690.4" font-size="12.8" textLength="28.6" lengthAdjust="spacingAndGlyphs" fill="#fff" stroke="#fff" stroke-width=".3">L7-021</text>
<text x="1248.2" y="656.9" font-size="12.8" textLength="19.5" lengthAdjust="spacingAndGlyphs" fill="#fff" stroke="#fff" stroke-width=".3">LIFT</text>
<rect x="1235.2" y="663.6" width="46.4" height="11.1" fill="none" stroke="#ffffff" stroke-width="1" shape-rendering="crispEdges" />
<text x="1243.5" y="672.8" font-size="12.8" textLength="28.2" lengthAdjust="spacingAndGlyphs" fill="#fff" stroke="#fff" stroke-width=".3">L7-022</text>
<text x="1248.2" y="753.0" font-size="12.8" textLength="19.5" lengthAdjust="spacingAndGlyphs" fill="#fff" stroke="#fff" stroke-width=".3">LIFT</text>
<rect x="1235.2" y="758.3" width="46.4" height="11.1" fill="none" stroke="#ffffff" stroke-width="1" shape-rendering="crispEdges" />
<text x="1243.5" y="767.5" font-size="12.8" textLength="28.2" lengthAdjust="spacingAndGlyphs" fill="#fff" stroke="#fff" stroke-width=".3">L7-023</text>
<text x="1302.3" y="704.7" font-size="12.8" textLength="28.7" lengthAdjust="spacingAndGlyphs" fill="#fff" stroke="#fff" stroke-width=".3">RISER</text>
<rect x="1293.5" y="710.6" width="47.0" height="10.9" fill="none" stroke="#ffffff" stroke-width="1" shape-rendering="crispEdges" />
<text x="1301.8" y="719.6" font-size="12.8" textLength="28.8" lengthAdjust="spacingAndGlyphs" fill="#fff" stroke="#fff" stroke-width=".3">L7-027</text>
<text x="1363.4" y="725.7" font-size="12.8" textLength="28.1" lengthAdjust="spacingAndGlyphs" fill="#fff" stroke="#fff" stroke-width=".3">STAIR</text>
<rect x="1354.2" y="732.4" width="46.9" height="10.7" fill="none" stroke="#ffffff" stroke-width="1" shape-rendering="crispEdges" />
<text x="1362.5" y="741.2" font-size="12.8" textLength="28.7" lengthAdjust="spacingAndGlyphs" fill="#fff" stroke="#fff" stroke-width=".3">L7-024</text>
<text x="1429.3" y="663.3" font-size="12.8" textLength="70.2" lengthAdjust="spacingAndGlyphs" fill="#fff" stroke="#fff" stroke-width=".3">PREMIUM E/S 3</text>
<rect x="1441.5" y="669.6" width="46.5" height="10.9" fill="none" stroke="#ffffff" stroke-width="1" shape-rendering="crispEdges" />
<text x="1449.8" y="678.6" font-size="12.8" textLength="28.3" lengthAdjust="spacingAndGlyphs" fill="#fff" stroke="#fff" stroke-width=".3">L7-008</text>
<text x="1456.1" y="759.6" font-size="12.8" textLength="74.9" lengthAdjust="spacingAndGlyphs" fill="#fff" stroke="#fff" stroke-width=".3">PREMIUM BED 3</text>
<rect x="1470.2" y="766.5" width="47.0" height="10.9" fill="none" stroke="#ffffff" stroke-width="1" shape-rendering="crispEdges" />
<text x="1478.5" y="775.5" font-size="12.8" textLength="28.8" lengthAdjust="spacingAndGlyphs" fill="#fff" stroke="#fff" stroke-width=".3">L7-007</text>
<text x="893.1" y="780.7" font-size="12.8" textLength="27.3" lengthAdjust="spacingAndGlyphs" fill="#fff" stroke="#fff" stroke-width=".3">BED 3</text>
<rect x="884.1" y="786.4" width="46.9" height="11.1" fill="none" stroke="#ffffff" stroke-width="1" shape-rendering="crispEdges" />
<text x="892.4" y="795.6" font-size="12.8" textLength="28.7" lengthAdjust="spacingAndGlyphs" fill="#fff" stroke="#fff" stroke-width=".3">L7-013</text>
<text x="951.0" y="809.0" font-size="12.8" textLength="23.0" lengthAdjust="spacingAndGlyphs" fill="#fff" stroke="#fff" stroke-width=".3">E/S 3</text>
<rect x="940.5" y="814.7" width="44.0" height="10.9" fill="none" stroke="#ffffff" stroke-width="1" shape-rendering="crispEdges" />
<text x="948.8" y="823.7" font-size="12.8" textLength="25.8" lengthAdjust="spacingAndGlyphs" fill="#fff" stroke="#fff" stroke-width=".3">L7-014</text>
<text x="995.4" y="810.5" font-size="12.8" textLength="22.6" lengthAdjust="spacingAndGlyphs" fill="#fff" stroke="#fff" stroke-width=".3">E/S 4</text>
<rect x="984.5" y="816.2" width="45.8" height="10.9" fill="none" stroke="#ffffff" stroke-width="1" shape-rendering="crispEdges" />
<text x="992.8" y="825.2" font-size="12.8" textLength="27.6" lengthAdjust="spacingAndGlyphs" fill="#fff" stroke="#fff" stroke-width=".3">L7-016</text>
<text x="1049.1" y="793.7" font-size="12.8" textLength="27.5" lengthAdjust="spacingAndGlyphs" fill="#fff" stroke="#fff" stroke-width=".3">BED 4</text>
<rect x="1040.5" y="799.4" width="46.2" height="11.1" fill="none" stroke="#ffffff" stroke-width="1" shape-rendering="crispEdges" />
<text x="1048.8" y="808.6" font-size="12.8" textLength="28.0" lengthAdjust="spacingAndGlyphs" fill="#fff" stroke="#fff" stroke-width=".3">L7-015</text>
<text x="1122.0" y="782.6" font-size="12.8" textLength="28.0" lengthAdjust="spacingAndGlyphs" fill="#fff" stroke="#fff" stroke-width=".3">RISER</text>
<rect x="1112.4" y="788.3" width="47.2" height="11.1" fill="none" stroke="#ffffff" stroke-width="1" shape-rendering="crispEdges" />
<text x="1120.7" y="797.5" font-size="12.8" textLength="29.0" lengthAdjust="spacingAndGlyphs" fill="#fff" stroke="#fff" stroke-width=".3">L7-026</text>
<rect x="1627.5" y="241.5" width="31.5" height="32.0" fill="#d8d8d8" stroke="#f0f0f0" stroke-width="1" shape-rendering="crispEdges" />
<rect x="1627.5" y="283.5" width="31.5" height="32.0" fill="#40c0c0" stroke="#f0f0f0" stroke-width="1" shape-rendering="crispEdges" />
<rect x="1627.5" y="325.5" width="31.5" height="32.0" fill="#c0c040" stroke="#f0f0f0" stroke-width="1" shape-rendering="crispEdges" />
<rect x="1627.5" y="388.5" width="31.5" height="31.0" fill="#404040" stroke="#f0f0f0" stroke-width="1" shape-rendering="crispEdges" />
<rect x="1627.5" y="430.5" width="31.5" height="31.0" fill="#a0e0e0" stroke="#f0f0f0" stroke-width="1" shape-rendering="crispEdges" />
<rect x="1627.5" y="471.5" width="31.5" height="32.0" fill="#20e0e0" stroke="#f0f0f0" stroke-width="1" shape-rendering="crispEdges" />
<rect x="1627.5" y="513.5" width="31.5" height="31.0" fill="#a060e0" stroke="#f0f0f0" stroke-width="1" shape-rendering="crispEdges" />
<rect x="1627.5" y="555.5" width="31.5" height="31.0" fill="#6060e0" stroke="#f0f0f0" stroke-width="1" shape-rendering="crispEdges" />
<rect x="1627.5" y="597.5" width="31.5" height="31.0" fill="#a0e060" stroke="#f0f0f0" stroke-width="1" shape-rendering="crispEdges" />
<rect x="1627.5" y="638.5" width="31.5" height="32.0" fill="#60e060" stroke="#f0f0f0" stroke-width="1" shape-rendering="crispEdges" />
<rect x="1627.5" y="680.5" width="31.5" height="32.0" fill="#a06060" stroke="#f0f0f0" stroke-width="1" shape-rendering="crispEdges" />
<rect x="1627.5" y="723.5" width="31.5" height="30.0" fill="#206060" stroke="#f0f0f0" stroke-width="1" shape-rendering="crispEdges" />
<rect x="1627.5" y="765.5" width="31.5" height="30.0" fill="#e0a0e0" stroke="#f0f0f0" stroke-width="1" shape-rendering="crispEdges" />
<rect x="1627.5" y="806.5" width="31.5" height="31.0" fill="#60a0e0" stroke="#f0f0f0" stroke-width="1" shape-rendering="crispEdges" />
<rect x="1629" y="170.5" width="32.2" height="112.5" rx="4" fill="#6a707b" fill-opacity=".82"/>
<rect x="1627.5" y="241.5" width="31.5" height="32.5" fill="#e6e6e6" fill-opacity=".55" stroke="#f4f4f4" stroke-width="1"/>
<path d="M1632.0 227.5L1658.0 227.5" stroke="#80868f" stroke-width="1" fill="none"  shape-rendering="crispEdges"/>
<circle cx="1655.0" cy="176.0" r="2.8" fill="#3d434e"/>
<path d="M1653.6 174.6l2.8 2.8m0 -2.8l-2.8 2.8" fill="none" stroke="#e8e8e8" stroke-width="1" />
<circle cx="1655.0" cy="278.8" r="2.8" fill="#3d434e"/>
<path d="M1653.2 277.8h3.6M1653.8 279.3h2.4l-1.2 1.4z" fill="#e8e8e8" stroke="#e8e8e8" stroke-width="0.8" />
<path d="M1634 198a8 6 0 0 1 8 -6h10v10a9 9 0 0 1 -9 9h-1a8 8 0 0 1 -8 -8z" fill="#b8bbc0" stroke="none" stroke-width="1" />
<circle cx="1642.5" cy="200.5" r="4.6" fill="#8f949c" stroke="#f0f0f0" stroke-width="1.2"/>
<path d="M1639.5 204.0L1635.5 208.5" stroke="#f0f0f0" stroke-width="1.4" fill="none" />
<text x="1645" y="215" font-size="8.5" font-weight="700" fill="#2f6fb0">2D</text>
<path d="M1642.6 219.5h5l-2.5 2.6z" fill="#8a9099" stroke="none" stroke-width="1" />
<rect x="1637.0" y="236.0" width="10.5" height="10.5" fill="#8fbf6f" stroke="#6fa050" stroke-width="1" shape-rendering="crispEdges" />
<circle cx="1648.0" cy="246.5" r="3.0" fill="#dfe3e6" stroke="#8a8f96" stroke-width="1"/>
<path d="M1650.0 249.0L1653.0 252.0" stroke="#8a8f96" stroke-width="1.4" fill="none" />
<path d="M1642.6 262h5l-2.5 2.6z" fill="#70757d" stroke="none" stroke-width="1" />
</svg>
<div class="b" style="left:135.5px;top:974.3px;width:66.5px;height:20.700000000000045px;background:#fff;border:1px solid #9a9a9a;box-shadow:1px 1px 3px rgba(0,0,0,.4);box-sizing:border-box;z-index:2"></div>
<svg width="1680" height="994" viewBox="0 0 1680 994" style="left:0;top:0;z-index:1"><rect x="625" y="975.2" width="5.8" height="10.8" fill="#9dcff8"/><rect x="632" y="974.2" width="6" height="8.6" fill="#f0a868"/><rect x="628.9" y="979.2" width="6" height="11" fill="#78d88a" stroke="#2d3440" stroke-width=".6"/><path d="M633.6 989.6L638.3 984.8" stroke="#6ab8f2" stroke-width="1.8"/><path d="M637.2 983.2a2.6 2.6 0 1 0 3.6 2.4l-2 .2l-.8-1.6z" fill="#6ab8f2"/><rect x="864.8" y="953.8" width="16.2" height="12" fill="#d8d8d8"/><path d="M892.5 957.5h9.5v9h-9.5zM892.5 957.5l4-3.8h9.5l-4 3.8M906 953.7v9l-4 3.8" fill="none" stroke="#f0f0f0" stroke-width="1.1" stroke-linejoin="round"/><circle cx="923.4" cy="957.9" r="3.3" fill="#f5c869"/><path d="M928.0 957.9L929.6 957.9M926.7 961.2L927.8 962.3M923.4 962.5L923.4 964.1M920.1 961.2L919.0 962.3M918.8 957.9L917.2 957.9M920.1 954.6L919.0 953.5M923.4 953.3L923.4 951.7M926.7 954.6L927.8 953.5" stroke="#f5c869" stroke-width="1.1"/><circle cx="929.6" cy="961" r="3.5" fill="#58d0e0"/><path d="M927.9 964.8h3.4v1.6l-1.7 1.5l-1.7-1.5z" fill="#fff"/><circle cx="948.7" cy="957.3" r="5.5" fill="#9da1a9"/><rect x="952" y="958.3" width="7" height="5.8" rx="1.2" fill="#8a8f98"/><rect x="943.2" y="964.2" width="10.3" height="2.4" fill="#14171d"/><rect x="954.5" y="965" width="3" height="3" fill="#8a8f98"/><path d="M973.4000000000001 967V957.3H985.0" fill="none" stroke="#ececec" stroke-width="1.8"/><path d="M980.2 951.5v3M969.2 962.4h3" stroke="#4db5ea" stroke-width="1.6"/><path d="M979.2 962.7l5 5m0-5l-5 5" stroke="#ef4050" stroke-width="1.6"/><path d="M999.9000000000001 967V957.3H1011.5" fill="none" stroke="#ececec" stroke-width="1.8"/><path d="M1006.7 951.5v3M995.7 962.4h3" stroke="#4db5ea" stroke-width="1.6"/><circle cx="1007.5" cy="961.4" r="3.5" fill="#58d0e0"/><path d="M1005.8 965.1999999999999h3.4v1.6l-1.7 1.5l-1.7-1.5z" fill="#fff"/><g fill="none" stroke="#aab0b8" stroke-width="1.2"><circle cx="1025" cy="961.3" r="2.5"/><circle cx="1032" cy="961.3" r="2.5"/><path d="M1027.5 961h2M1023 959.5l2.5-3M1033.5 959.3l1.8-3"/></g><circle cx="1054.8" cy="958.3" r="4.3" fill="#58d0e0"/><path d="M1053.1 962.8999999999999h3.4v1.6l-1.7 1.5l-1.7-1.5z" fill="#fff"/><path d="M1075 954h8l3 3v6h-11z" fill="#9da1a9"/><rect x="1077.5" y="957" width="6" height="4.5" fill="#c5c8cd"/><path d="M1081.5 962v3.5h2.3M1087.5 962v3.5h-2.3M1081.5 961.5M1083.8 960.3h3.7v1.7" fill="none" stroke="#e6e6e6" stroke-width="1"/><path d="M1099 966V957l4.5-5h8l3.4 4.5v7h-5v2.5" fill="#7d828c"/><path d="M1101.5 954v12M1105 953v13M1108.5 953v10M1099 958h12M1099 961.5h11" stroke="#323946" stroke-width=".9"/><rect x="1110.8" y="965" width="3" height="3" fill="#9da1a9"/><path d="M1125.5 952.5v12M1138.5 952.5v5M1125.5 954.8h13" fill="none" stroke="#ececec" stroke-width="1.2"/><path d="M1126 961.5h7" stroke="#ececec" stroke-width="1.2" stroke-dasharray="2 1.4"/><circle cx="1137.6" cy="961.4" r="3.5" fill="#58d0e0"/><path d="M1135.8999999999999 965.1999999999999h3.4v1.6l-1.7 1.5l-1.7-1.5z" fill="#fff"/><path d="M844.6 982.4l3 3l3-3" fill="none" stroke="#5d6573" stroke-width="1.6"/><path d="M1168.3 982.4l3.2 3.2l3.2-3.2" fill="none" stroke="#6d7686" stroke-width="1.6"/><path d="M870.5 974h7.5v5h-4l-2.3 2.6v2.4h3v4.4h-10.5v-4.4h3v-3z" fill="#9a9ea6"/><rect x="923.1" y="974" width="16" height="15.8" fill="#f2f2f2"/><rect x="923.1" y="974" width="16" height="2.4" fill="#b5b5b5"/><path d="M925 979.5h1.6M925 983h1.6M925 986.5h1.6" stroke="#333" stroke-width="1.3"/><path d="M928.2 979.5h8.7M928.2 983h8.7M928.2 986.5h8.7" stroke="#333" stroke-width="1.3"/><rect x="952" y="974" width="13" height="11.5" fill="#8a8f98"/><rect x="952" y="974" width="13" height="2" fill="#6d727b"/><path d="M954 979h1.4M954 982h1.4M956.8 979h6.5M956.8 982h6.5" stroke="#3b4453" stroke-width="1.1"/><path d="M950.5 987h7v-2l3 3-3 3v-2h-7z" fill="#8a8f98"/><rect x="1186" y="977" width="12" height="11.9" fill="#9399a5"/><path d="M1188.3 982.8l2.6 2.8l4.6-5.6" fill="none" stroke="#20252e" stroke-width="1.7"/><g fill="none" stroke="#e8a878" stroke-width="1.2"><rect x="1405.2" y="975.4" width="7.6" height="4.4" rx="2.2"/><rect x="1411.4" y="975.4" width="7.6" height="4.4" rx="2.2"/></g><path transform="translate(1412.2 978.6) scale(1.0)" d="M0 0L0 9.8L2.3 7.7L4.2 11.6L6 10.8L4.1 7L7.2 7Z" fill="#fff" stroke="#3b4453" stroke-width=".5"/><path d="M1432 981l6-6l3 3l-3 3zM1432 985.5l5-5h4l-3.5 5z" fill="#55aef0"/><path d="M1441.2 974.6l5.4 5.4m0-5.4l-5.4 5.4" stroke="#ef4050" stroke-width="1.6"/><path transform="translate(1437.4 978.6) scale(1.0)" d="M0 0L0 9.8L2.3 7.7L4.2 11.6L6 10.8L4.1 7L7.2 7Z" fill="#fff" stroke="#3b4453" stroke-width=".5"/><path d="M1459 974.8h7v1.8h-1.3v4h1.8v1.6h-8v-1.6h1.8v-4H1459z" fill="#d0d0d0"/><path d="M1462.5 982v5" stroke="#d0d0d0" stroke-width="1"/><path transform="translate(1463.8 978.6) scale(1.0)" d="M0 0L0 9.8L2.3 7.7L4.2 11.6L6 10.8L4.1 7L7.2 7Z" fill="#fff" stroke="#3b4453" stroke-width=".5"/><path d="M1484.2 978.5l5-3.5v11l-5 3.6z" fill="#55aef0"/><path d="M1489.2 975h4v3" fill="none" stroke="#55aef0" stroke-width="1.2"/><path d="M1493 974.6l5.4 5.4m0-5.4l-5.4 5.4" stroke="#ef4050" stroke-width="1.6"/><path transform="translate(1490 978.6) scale(1.0)" d="M0 0L0 9.8L2.3 7.7L4.2 11.6L6 10.8L4.1 7L7.2 7Z" fill="#fff" stroke="#3b4453" stroke-width=".5"/><path d="M1515.5 974v12M1509.5 980h10" stroke="#f2f2f2" stroke-width="1.2"/><path d="M1515.5 973l-2 2.6h4zM1508.8 980l2.6-2v4z" fill="#f2f2f2"/><path transform="translate(1516.5 978.8) scale(1.0)" d="M0 0L0 9.8L2.3 7.7L4.2 11.6L6 10.8L4.1 7L7.2 7Z" fill="#fff" stroke="#3b4453" stroke-width=".5"/><circle cx="1548.5" cy="981.5" r="1.1" fill="#5d6573"/><circle cx="1546.7" cy="985.7" r="1.1" fill="#5d6573"/><circle cx="1542.5" cy="987.5" r="1.1" fill="#5d6573"/><circle cx="1538.3" cy="985.7" r="1.1" fill="#5d6573"/><circle cx="1536.5" cy="981.5" r="1.1" fill="#5d6573"/><circle cx="1538.3" cy="977.3" r="1.1" fill="#5d6573"/><circle cx="1542.5" cy="975.5" r="1.1" fill="#5d6573"/><circle cx="1546.7" cy="977.3" r="1.1" fill="#5d6573"/><path d="M1558.7 975.3h16.3l-6 7.5v7.2l-4.2 1v-8.2z" fill="#cfcfcf"/><path d="M1558.7 975.3h16.3l-1.2 1.6h-13.9z" fill="#eaeaea"/></svg>
<span class="t" style="left:14.3px;top:6.5px;font-size:12px;color:#fff;transform:scaleX(0.9305)">File</span>
<span class="t" style="left:57.3px;top:6.5px;font-size:12px;color:#fff;transform:scaleX(1.0104)">Architecture</span>
<span class="t" style="left:142.3px;top:6.5px;font-size:12px;color:#fff;transform:scaleX(0.9797)">Structure</span>
<span class="t" style="left:210.0px;top:6.5px;font-size:12px;color:#fff;transform:scaleX(0.9028)">Steel</span>
<span class="t" style="left:255.3px;top:6.5px;font-size:12px;color:#fff;transform:scaleX(0.9192)">Precast</span>
<span class="t" style="left:313.3px;top:6.5px;font-size:12px;color:#fff;transform:scaleX(0.9214)">Systems</span>
<span class="t" style="left:376.0px;top:6.5px;font-size:12px;color:#fff;transform:scaleX(0.9562)">Insert</span>
<span class="t" style="left:425.3px;top:6.5px;font-size:12px;color:#fff;transform:scaleX(1.0136)">Annotate</span>
<span class="t" style="left:494.3px;top:6.5px;font-size:12px;color:#fff;transform:scaleX(0.9531)">Analyze</span>
<span class="t" style="left:555.4px;top:6.5px;font-size:12px;color:#fff;transform:scaleX(0.9819)">Massing &amp; Site</span>
<span class="t" style="left:654.3px;top:6.5px;font-size:12px;color:#fff;transform:scaleX(0.9890)">Collaborate</span>
<span class="t" style="left:735.3px;top:6.5px;font-size:12px;color:#fff;transform:scaleX(0.9575)">View</span>
<span class="t" style="left:780.3px;top:6.5px;font-size:12px;color:#fff;transform:scaleX(0.9914)">Manage</span>
<span class="t" style="left:843.0px;top:6.5px;font-size:12px;color:#fff;transform:scaleX(1.0155)">Add-Ins</span>
<span class="t" style="left:905.4px;top:6.5px;font-size:12px;color:#fff;transform:scaleX(0.9597)">dRofus</span>
<span class="t" style="left:962.0px;top:6.5px;font-size:12px;color:#fff;transform:scaleX(1.0752)">Modify</span>
<span class="t" style="left:6.0px;top:65.4px;font-size:12px;color:#fff;transform:scaleX(0.9690)">Synchronize</span>
<span class="t" style="left:76.4px;top:65.4px;font-size:12px;color:#fff;transform:scaleX(0.9793);z-index:6">Stop tracking</span>
<span class="t" style="left:152.0px;top:65.4px;font-size:12px;color:#fff;transform:scaleX(0.9906)">Link to dRofus</span>
<span class="t" style="left:257.4px;top:32.5px;font-size:12px;color:#fff;transform:scaleX(0.9898)">Linked Models</span>
<span class="t" style="left:257.4px;top:56.3px;font-size:12px;color:#fff;transform:scaleX(1.0019)">Import Rooms</span>
<span class="t" style="left:257.4px;top:80.2px;font-size:12px;color:#fff;transform:scaleX(0.9628)">Import Spaces</span>
<span class="t" style="left:119.6px;top:102.0px;font-size:12px;color:#fff;transform:scaleX(0.9753)">Rooms/Spaces/Areas</span>
<span class="t" style="left:366.0px;top:65.4px;font-size:12px;color:#fff;transform:scaleX(0.9902)">Items in Room</span>
<span class="t" style="left:457.0px;top:65.4px;font-size:12px;color:#fff;transform:scaleX(1.0030)">Items &lt;-&gt; Families</span>
<span class="t" style="left:443.0px;top:102.0px;font-size:12px;color:#fff;transform:scaleX(0.9781)">Items</span>
<span class="t" style="left:567.0px;top:65.4px;font-size:12px;color:#fff;transform:scaleX(0.9345)">Systems</span>
<span class="t" style="left:624.3px;top:65.4px;font-size:12px;color:#fff;transform:scaleX(0.9405)">Sync Selected Instances</span>
<span class="t" style="left:785.4px;top:44.1px;font-size:12px;color:#fff;transform:scaleX(0.9680)">Purge occurrences</span>
<span class="t" style="left:785.4px;top:68.1px;font-size:12px;color:#fff;transform:scaleX(0.9688)">Upload Images</span>
<span class="t" style="left:669.3px;top:102.0px;font-size:12px;color:#fff;transform:scaleX(0.9678)">Systems/Occurrences</span>
<span class="t" style="left:919.3px;top:32.1px;font-size:12px;color:#fff;transform:scaleX(0.9598)">Categories</span>
<span class="t" style="left:919.3px;top:56.1px;font-size:12px;color:#fff;transform:scaleX(1.0255)">Attribute Configurations</span>
<span class="t" style="left:919.3px;top:79.7px;font-size:12px;color:#fff;transform:scaleX(1.0158)">Model Options</span>
<span class="t" style="left:1079.3px;top:32.1px;font-size:12px;color:#fff;transform:scaleX(0.9830);z-index:6">Hide panel</span>
<span class="t" style="left:1079.3px;top:56.1px;font-size:12px;color:#fff;transform:scaleX(0.9783)">Start log to Change List</span>
<span class="t" style="left:1079.3px;top:80.3px;font-size:12px;color:#6e7785;transform:scaleX(0.9761)">Open in dRofus</span>
<span class="t" style="left:1073.6px;top:102.0px;font-size:12px;color:#fff;transform:scaleX(0.9423)">Tools</span>
<span class="t" style="left:1233.0px;top:32.1px;font-size:12px;color:#fff;transform:scaleX(0.9999)">Log in</span>
<span class="t" style="left:1233.0px;top:56.1px;font-size:12px;color:#fff;transform:scaleX(1.0313)">Log out</span>
<span class="t" style="left:1233.0px;top:79.7px;font-size:12px;color:#fff;transform:scaleX(1.0155)">Options</span>
<span class="t" style="left:2.6px;top:150.2px;font-size:12px;color:#fff;transform:scaleX(0.9736)">Project Browser - Step2+3_Complex_Model_A</span>
<span class="t" style="left:41.0px;top:178.0px;font-size:12px;color:#8893a4;transform:scaleX(0.9466);-webkit-text-stroke:0.4px #8893a4">Search</span>
<span class="t" style="left:299.0px;top:150.0px;font-size:12px;color:#fff;transform:scaleX(0.9729)">dRofus</span>
<span class="t" style="left:478.0px;top:560.4px;font-size:12px;color:#1c1c1c;transform:scaleX(1.0051)">No or invalid selection</span>
<span class="t" style="left:808.0px;top:151.5px;font-size:12px;color:#fff;transform:scaleX(0.8872);font-weight:700">LEVEL 7</span>
<span class="t" style="left:5.5px;top:952.8px;font-size:12px;color:#fff;transform:scaleX(0.9655)">Project Browser - Step2...</span>
<span class="t" style="left:149.0px;top:952.8px;font-size:12px;color:#fff;transform:scaleX(0.9871)">Properties</span>
<span class="t" style="left:43.0px;top:208.2px;font-size:12px;color:#fff;transform:scaleX(0.9831);-webkit-text-stroke:0.3px #fff">Views ("Company Name")</span>
<span class="t" style="left:39.2px;top:228.2px;font-size:12px;color:#fff;transform:scaleX(0.7888);-webkit-text-stroke:0.3px #fff">???</span>
<span class="t" style="left:55.0px;top:248.2px;font-size:12px;color:#fff;transform:scaleX(1.0004);-webkit-text-stroke:0.3px #fff">None</span>
<span class="t" style="left:91.0px;top:268.2px;font-size:12px;color:#fff;transform:scaleX(0.9626);-webkit-text-stroke:0.3px #fff">3D View: 3D</span>
<span class="t" style="left:39.2px;top:288.2px;font-size:12px;color:#fff;transform:scaleX(0.8823);-webkit-text-stroke:0.3px #fff">DESIGN</span>
<span class="t" style="left:55.0px;top:308.2px;font-size:12px;color:#fff;transform:scaleX(0.8992);-webkit-text-stroke:0.3px #fff">02_GA_Plans</span>
<span class="t" style="left:91.0px;top:328.2px;font-size:12px;color:#fff;transform:scaleX(0.9143);-webkit-text-stroke:0.3px #fff">Floor Plan: LEVEL 0</span>
<span class="t" style="left:91.0px;top:348.2px;font-size:12px;color:#fff;transform:scaleX(0.9143);-webkit-text-stroke:0.3px #fff">Floor Plan: LEVEL 1</span>
<span class="t" style="left:91.0px;top:368.2px;font-size:12px;color:#fff;transform:scaleX(0.9143);-webkit-text-stroke:0.3px #fff">Floor Plan: LEVEL 2</span>
<span class="t" style="left:91.0px;top:388.2px;font-size:12px;color:#fff;transform:scaleX(0.9143);-webkit-text-stroke:0.3px #fff">Floor Plan: LEVEL 3</span>
<span class="t" style="left:91.0px;top:408.2px;font-size:12px;color:#fff;transform:scaleX(0.9143);-webkit-text-stroke:0.3px #fff">Floor Plan: LEVEL 4</span>
<span class="t" style="left:91.0px;top:428.2px;font-size:12px;color:#fff;transform:scaleX(0.9143);-webkit-text-stroke:0.3px #fff">Floor Plan: LEVEL 5</span>
<span class="t" style="left:91.0px;top:448.2px;font-size:12px;color:#fff;transform:scaleX(0.9143);-webkit-text-stroke:0.3px #fff">Floor Plan: LEVEL 6</span>
<span class="t" style="left:91.0px;top:468.2px;font-size:12px;color:#fff;transform:scaleX(0.9348);font-weight:700">Floor Plan: LEVEL 7</span>
<span class="t" style="left:91.0px;top:488.2px;font-size:12px;color:#fff;transform:scaleX(0.9143);-webkit-text-stroke:0.3px #fff">Floor Plan: LEVEL 8</span>
<span class="t" style="left:91.0px;top:508.2px;font-size:12px;color:#fff;transform:scaleX(0.9143);-webkit-text-stroke:0.3px #fff">Floor Plan: LEVEL 9</span>
<span class="t" style="left:91.0px;top:528.2px;font-size:12px;color:#fff;transform:scaleX(0.9220);-webkit-text-stroke:0.3px #fff">Floor Plan: LEVEL 10</span>
<span class="t" style="left:91.0px;top:548.2px;font-size:12px;color:#fff;transform:scaleX(0.9115);-webkit-text-stroke:0.3px #fff">Floor Plan: LEVEL B1</span>
<span class="t" style="left:91.0px;top:568.2px;font-size:12px;color:#fff;transform:scaleX(0.9115);-webkit-text-stroke:0.3px #fff">Floor Plan: LEVEL B2</span>
<span class="t" style="left:91.0px;top:588.2px;font-size:12px;color:#fff;transform:scaleX(0.9063);-webkit-text-stroke:0.3px #fff">Floor Plan: LEVEL R1</span>
<span class="t" style="left:91.0px;top:608.2px;font-size:12px;color:#fff;transform:scaleX(0.9063);-webkit-text-stroke:0.3px #fff">Floor Plan: LEVEL R2</span>
<span class="t" style="left:43.0px;top:628.2px;font-size:12px;color:#fff;transform:scaleX(0.9555);-webkit-text-stroke:0.3px #fff">Legends</span>
<span class="t" style="left:43.0px;top:648.2px;font-size:12px;color:#fff;transform:scaleX(0.9800);-webkit-text-stroke:0.3px #fff">Schedules/Quantities (all)</span>
<span class="t" style="left:43.0px;top:668.2px;font-size:12px;color:#fff;transform:scaleX(0.9729);-webkit-text-stroke:0.3px #fff">Sheets ("Company Name")</span>
<span class="t" style="left:43.0px;top:688.2px;font-size:12px;color:#fff;transform:scaleX(0.9402);-webkit-text-stroke:0.3px #fff">Families</span>
<span class="t" style="left:43.0px;top:708.2px;font-size:12px;color:#fff;transform:scaleX(0.9655);-webkit-text-stroke:0.3px #fff">Groups</span>
<span class="t" style="left:43.0px;top:728.2px;font-size:12px;color:#fff;transform:scaleX(0.9457);-webkit-text-stroke:0.3px #fff">Revit Links</span>
<span class="t" style="left:1.8px;top:976.1px;font-size:13px;color:#fff;transform:scaleX(0.8975)">Click to select, TAB for alt</span>
<span class="t" style="left:209.6px;top:976.1px;font-size:13px;color:#fff;transform:scaleX(0.8556)">adds, SHIFT unselects.</span>
<span class="t" style="left:201.6px;top:976.1px;font-size:13px;color:#fff;transform:scaleX(0.6359)">L</span>
<span class="t" style="left:141.4px;top:977.3px;font-size:12px;color:#575757;transform:scaleX(0.9883);z-index:3">Calculator</span>
<span class="t" style="left:806.7px;top:955.0px;font-size:11.5px;color:#fff;transform:scaleX(0.9297)">1 : 100</span>
<span class="t" style="left:880.5px;top:977.5px;font-size:12px;color:#9a9ea6;transform:scaleX(0.8686)">:0</span>
<span class="t" style="left:976.7px;top:977.9px;font-size:13px;color:#fff;transform:scaleX(0.9389)">Main Model</span>
<span class="t" style="left:1200.7px;top:975.9px;font-size:13px;color:#fff;transform:scaleX(0.9010)">Exclude Options</span>
<span class="t" style="left:1576.0px;top:977.8px;font-size:12px;color:#fff;transform:scaleX(0.8986)">:0</span>
</body></html>
